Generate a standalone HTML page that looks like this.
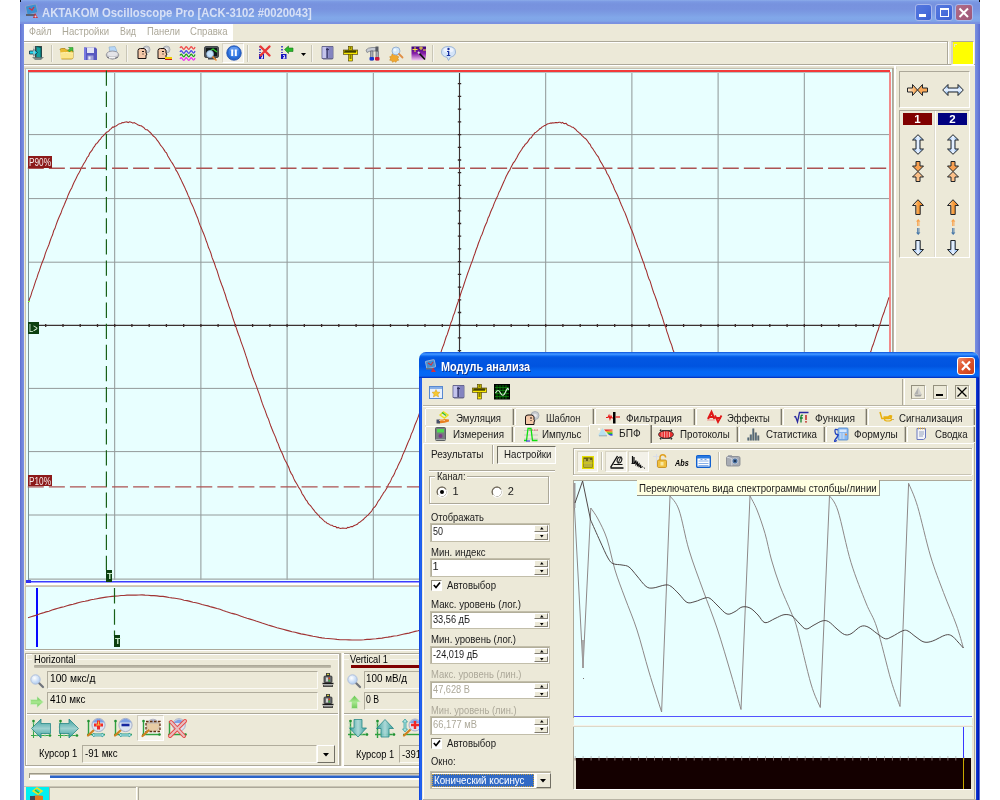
<!DOCTYPE html><html><head><meta charset="utf-8"><title>AKTAKOM Oscilloscope Pro</title><style>
html,body{margin:0;padding:0;background:#fff;}
body{width:1000px;height:800px;overflow:hidden;position:relative;font-family:"Liberation Sans",sans-serif;}
div,svg,span.t{position:absolute;box-sizing:border-box}
span.t{white-space:pre;line-height:1;}
#w{left:0;top:0;width:1000px;height:800px;will-change:transform;}
svg{overflow:visible}
</style></head><body><div id="w">
<div style="left:20px;top:0px;width:959.5px;height:800px;background:#ece9d8"></div>
<div style="left:20px;top:0px;width:959.5px;height:24px;background:linear-gradient(#8cace9 0%,#7b99e3 7%,#7792de 17%,#7893df 38%,#7c9ce3 55%,#81a7e9 72%,#80a5e8 88%,#7990e0 95%,#7b92e0 100%)"></div>
<div style="left:20px;top:0px;width:1px;height:2px;background:#101018"></div>
<div style="left:979px;top:0px;width:1px;height:1.5px;background:#101018"></div>
<div style="left:20px;top:24px;width:4px;height:776px;background:linear-gradient(90deg,#5b6bcf,#6d82da 40%,#7a90e2)"></div>
<div style="left:975px;top:24px;width:4.5px;height:776px;background:linear-gradient(90deg,#7a90e2,#6d82da 50%,#5b6bcf)"></div>
<svg style="left:23px;top:3px;" width="18" height="17" viewBox="0 0 18 17"><rect x="3" y="2" width="11" height="9" rx="1" fill="#3a8fd0" stroke="#8aa0c8" stroke-width="1" transform="rotate(-12 8 6)"/><path d="M6 5l3 2 2-3" stroke="#d03040" stroke-width="1.3" fill="none"/><rect x="3" y="11" width="9" height="2" fill="#5a6070"/><path d="M10 15l5 0-3-5z" fill="#c03040"/><circle cx="12.5" cy="13.5" r="1" fill="#f0d0d0"/></svg>
<span class="t" style="left:42.3px;top:5.70px;font-size:13px;color:#d6e0f6;font-weight:bold;transform:scaleX(0.8688);transform-origin:0 0;">AKTAKOM Oscilloscope Pro [ACK-3102 #0020043]</span>
<div style="left:914.7px;top:3.5px;width:17.5px;height:17px;background:linear-gradient(135deg,#5577dd,#4a6fdc 50%,#3b5fd0);border:1px solid #a8b8ec;border-radius:3px"></div>
<div style="left:935px;top:3.5px;width:17.5px;height:17px;background:linear-gradient(135deg,#5577dd,#4a6fdc 50%,#3b5fd0);border:1px solid #a8b8ec;border-radius:3px"></div>
<div style="left:955.3px;top:3.5px;width:17.5px;height:17px;background:linear-gradient(135deg,#b07088,#a86080 50%,#9c5878);border:1px solid #a8b8ec;border-radius:3px"></div>
<div style="left:919px;top:14px;width:6.5px;height:2.6px;background:#fff"></div>
<div style="left:939.5px;top:7.5px;width:9px;height:9px;border:1px solid #fff;border-top:2.5px solid #fff"></div>
<svg style="left:955.3px;top:3.5px;" width="17.5" height="17" viewBox="0 0 17.5 17"><path d="M4.5 4.5l8.5 8.5M13 4.5l-8.5 8.5" stroke="#fff" stroke-width="2" /></svg>
<div style="left:24px;top:24px;width:209px;height:17px;background:#fff"></div>
<span class="t" style="left:28.5px;top:26.49px;font-size:11px;color:#aca899;transform:scaleX(0.8319);transform-origin:0 0;">Файл</span>
<span class="t" style="left:62px;top:26.49px;font-size:11px;color:#aca899;transform:scaleX(0.8714);transform-origin:0 0;">Настройки</span>
<span class="t" style="left:119.6px;top:26.49px;font-size:11px;color:#aca899;transform:scaleX(0.8038);transform-origin:0 0;">Вид</span>
<span class="t" style="left:147px;top:26.49px;font-size:11px;color:#aca899;transform:scaleX(0.8589);transform-origin:0 0;">Панели</span>
<span class="t" style="left:190px;top:26.49px;font-size:11px;color:#aca899;transform:scaleX(0.8689);transform-origin:0 0;">Справка</span>
<div style="left:24px;top:41px;width:924px;height:1px;background:#aca899"></div>
<div style="left:24px;top:42px;width:924px;height:1px;background:#fff"></div>
<div style="left:24px;top:64px;width:951px;height:1px;background:#aca899"></div>
<div style="left:24px;top:65px;width:951px;height:1px;background:#fff"></div>
<div style="left:947px;top:42px;width:1px;height:22px;background:#aca899"></div>
<div style="left:948px;top:42px;width:1px;height:22px;background:#fff"></div>
<div style="left:951px;top:41px;width:23px;height:24px;background:#ffff00;border-top:1px solid #aca899;border-left:2px solid #d8d4c0;border-right:1px solid #fff;border-bottom:1px solid #fff"></div>
<div style="left:954px;top:44px;width:3px;height:1px;background:#e8e8c0"></div>
<div style="left:954px;top:44px;width:1px;height:3px;background:#e8e8c0"></div>
<div style="left:51px;top:45px;width:1px;height:17px;background:#c9c6b6"></div>
<div style="left:52px;top:45px;width:1px;height:17px;background:#f6f5ef"></div>
<div style="left:126px;top:45px;width:1px;height:17px;background:#c9c6b6"></div>
<div style="left:127px;top:45px;width:1px;height:17px;background:#f6f5ef"></div>
<div style="left:247px;top:45px;width:1px;height:17px;background:#c9c6b6"></div>
<div style="left:248px;top:45px;width:1px;height:17px;background:#f6f5ef"></div>
<div style="left:311px;top:45px;width:1px;height:17px;background:#c9c6b6"></div>
<div style="left:312px;top:45px;width:1px;height:17px;background:#f6f5ef"></div>
<div style="left:432px;top:45px;width:1px;height:17px;background:#c9c6b6"></div>
<div style="left:433px;top:45px;width:1px;height:17px;background:#f6f5ef"></div>
<div style="left:222px;top:43px;width:22px;height:20px;background:#f4f2ea;border:1px solid #d8d4c4;border-bottom-color:#fff;border-right-color:#fff"></div>
<svg style="left:29px;top:45px;" width="16" height="16" viewBox="0 0 16 16"><path d="M6 1h7v12h-7z" fill="#404848"/><path d="M7.5 1.5l4.5 1v11l-4.5-1.5z" fill="#10a0a0"/><path d="M7.5 1.5l4.5 1v11" stroke="#004848" stroke-width=".8" fill="none"/><path d="M0.5 6h4v-2l4 3.5-4 3.5v-2h-4z" fill="#20d8f0" stroke="#103040" stroke-width=".8"/><path d="M3 12h12l-3 3h-6z" fill="#607070" opacity=".8"/><path d="M5 1v11" stroke="#c0c8c8" stroke-width="1.2"/></svg>
<svg style="left:58.5px;top:45px;" width="16" height="16" viewBox="0 0 16 16"><path d="M1 5q0-1.5 1.5-1.5h3.5l1.5 1.5h5q1.5 0 1.5 1.5v6q0 1.5-1.5 1.5h-10q-1.500-1.5-1.5z" fill="#e8b830" stroke="#b08818" stroke-width=".8"/><path d="M1.5 8h12.500v4.500q0 1-1 1h-10.500q-1 0-1-1z" fill="#fce68c"/><path d="M1.500 8q4-1 12.500 0" stroke="#fff4b8" stroke-width="1" fill="none"/><path d="M9.500 2.500h4.500v4l-1.500-1.500-2 2-1.500-1.500 2-2z" fill="#40c040" stroke="#208020" stroke-width=".5"/></svg>
<svg style="left:82.5px;top:45.5px;" width="16" height="16" viewBox="0 0 16 16"><path d="M1 1.500h11.500l1.500 1.500v11h-13z" fill="#5858c0"/><path d="M1 1.500h2v12.500h-2z" fill="#7878e0"/><rect x="4" y="1.500" width="7" height="5.500" fill="#e4e4f4"/><rect x="4.500" y="9.500" width="6" height="4.500" fill="#a0a0d8"/><rect x="5.500" y="10.500" width="2" height="3" fill="#e8e8f8"/></svg>
<svg style="left:105px;top:45.5px;" width="16" height="16" viewBox="0 0 16 16"><path d="M4 1l6-.5 2 5-7 1z" fill="#b8d8f8" stroke="#88a8c8" stroke-width=".6"/><ellipse cx="7.500" cy="9" rx="6.300" ry="4" fill="#c8c8cc" stroke="#8c8c94" stroke-width=".8"/><ellipse cx="7.500" cy="8" rx="5" ry="2.200" fill="#e4e4e8"/><path d="M2 11q5.500 3.500 11 0" stroke="#707078" stroke-width="1" fill="none"/><rect x="4" y="11" width="6" height="1.500" fill="#f4f4f4"/></svg>
<svg style="left:136.5px;top:45px;" width="16" height="16" viewBox="0 0 16 16"><circle cx="9.500" cy="4.500" r="3.500" fill="#c8ccd0" stroke="#9ca0a8" stroke-width=".8"/><circle cx="9.500" cy="4.500" r="1.500" fill="#e8e8ec"/><path d="M1 5.500q0-2 2.500-2h3.500l2 1.500v3l1 1.500-1 .5v3.500h-8z" fill="#f4c8a8" stroke="#181010" stroke-width="1"/><path d="M5 6.500h2M6 8.500v1" stroke="#181010" stroke-width="1"/></svg>
<svg style="left:157px;top:45px;" width="16" height="16" viewBox="0 0 16 16"><circle cx="9.500" cy="4.500" r="3.500" fill="#c8ccd0" stroke="#9ca0a8" stroke-width=".8"/><circle cx="9.500" cy="4.500" r="1.500" fill="#e8e8ec"/><path d="M1 5.500q0-2 2.500-2h3.500l2 1.500v3l1 1.500-1 .5v3.500h-8z" fill="#f4c8a8" stroke="#181010" stroke-width="1"/><path d="M5 6.500h2M6 8.500v1" stroke="#181010" stroke-width="1"/></svg>
<div style="left:165px;top:57px;width:7px;height:1.5px;background:#f0d000"></div>
<div style="left:165px;top:58.5px;width:7px;height:1.5px;background:#d01818"></div>
<svg style="left:180px;top:44.5px;" width="16" height="16" viewBox="0 0 16 16"><path d="M0 3q1.200-2.500 2.500 0t2.500 0 2.500 0 2.500 0 2.500 0 2.500-1" stroke="#f04848" stroke-width="1.300" fill="none"/><path d="M0 7q1.200-2.500 2.500 0t2.500 0 2.500 0 2.500 0 2.500 0 2.500-1" stroke="#4848e8" stroke-width="1.300" fill="none"/><path d="M0 10.500q1.200-2.500 2.500 0t2.500 0 2.500 0 2.500 0 2.500 0 2.500-1" stroke="#20a020" stroke-width="1.300" fill="none"/><path d="M0 14q1.200-2.500 2.500 0t2.500 0 2.500 0 2.500 0 2.500 0 2.500-1" stroke="#f030f0" stroke-width="1.300" fill="none"/></svg>
<svg style="left:203.5px;top:45.5px;" width="16" height="16" viewBox="0 0 16 16"><rect x=".5" y=".5" width="14" height="11" rx="1.500" fill="#505458" stroke="#303438" stroke-width=".8"/><rect x="2" y="2" width="11" height="8" fill="#101818"/><path d="M6 5l3-2 4 3" stroke="#30d030" stroke-width="1.200" fill="none"/><rect x="4" y="12" width="8" height="1.500" fill="#404448"/><circle cx="6" cy="8" r="3.500" fill="#c8e4fc" stroke="#88a8d0" stroke-width=".8"/><path d="M8.500 10.500l4 4" stroke="#e88830" stroke-width="1.600"/></svg>
<svg style="left:225.5px;top:45px;" width="16" height="16" viewBox="0 0 16 16"><circle cx="8" cy="8" r="7.300" fill="#2868d0"/><circle cx="8" cy="7" r="5.500" fill="#3c80e8"/><ellipse cx="8" cy="4.200" rx="4.500" ry="2.200" fill="#78a8f4" opacity=".6"/><rect x="5.200" y="4.500" width="2" height="6.500" fill="#fff"/><rect x="8.800" y="4.500" width="2" height="6.500" fill="#fff"/><circle cx="8" cy="8" r="7.300" fill="none" stroke="#1848a8" stroke-width=".7"/></svg>
<svg style="left:257.5px;top:45px;" width="16" height="16" viewBox="0 0 16 16"><rect x="1" y="9" width="5" height="5" fill="#1818c0"/><path d="M3 10.500h1.500v2.500h-1.500M3 13h2" stroke="#fff" stroke-width=".8" fill="none"/><path d="M2 1v1.500M2 4v1.500M2 7v1" stroke="#1818c0" stroke-width="1.500"/><path d="M2.500 1.500l9 9M11.500 1.500l-9 9" stroke="#e83838" stroke-width="2.400" stroke-linecap="round"/></svg>
<svg style="left:279.5px;top:45px;" width="16" height="16" viewBox="0 0 16 16"><rect x="1" y="9" width="5.500" height="5" fill="#1818c0"/><path d="M3 10.500h1.500v2.500h-1.500M3 13h2.500" stroke="#fff" stroke-width=".8" fill="none"/><path d="M2 1v1.500M2 4v1.500M2 7v1" stroke="#1818c0" stroke-width="1.500"/><path d="M4.500 4.500l4-3.500v2h4.500v3.500h-4.500v2z" fill="#28b828" stroke="#187818" stroke-width=".6"/></svg>
<svg style="left:300.5px;top:52.5px;" width="5" height="3" viewBox="0 0 5 3"><path d="M0 0h5l-2.500 3z" fill="#000"/></svg>
<svg style="left:320.5px;top:45px;" width="16" height="16" viewBox="0 0 16 16"><path d="M1 1.500h11v12h-11z" fill="#9898d0" stroke="#505080" stroke-width=".8"/><path d="M1.500 2h3.500v11h-3.500z" fill="#c4c4ec"/><path d="M7.500 2h4v11h-4z" fill="#8484c0"/><path d="M6.200 3v10" stroke="#404070" stroke-width="1.400"/><path d="M5 4.500h3" stroke="#303060" stroke-width="1.200"/><path d="M2 14h9.500" stroke="#6c6c90" stroke-width="1"/></svg>
<svg style="left:342.5px;top:45.5px;" width="16" height="16" viewBox="0 0 16 16"><rect x="5.500" y=".3" width="4" height="14.700" fill="#f8e800" stroke="#403400" stroke-width=".6"/><rect x=".3" y="4" width="14.400" height="4.300" fill="#f8e800" stroke="#403400" stroke-width=".6"/><path d="M2 5.500v1.500M4 5.500v1.500M6 5.500v1.500M8 5.500v1.500M10 5.500v1.500M12 5.500v1.500M6.500 10h2M6.500 12h2M6.500 2h2M1.500 5h12" stroke="#101000" stroke-width="1.1"/></svg>
<svg style="left:365px;top:45.5px;" width="16" height="16" viewBox="0 0 16 16"><path d="M1 4q2-2.500 6-2.500h4v3.500h-4q-3 0-5 1.500z" fill="#c8ccd4" stroke="#70747c" stroke-width=".7"/><rect x="10.500" y=".5" width="3" height="5" fill="#585c64"/><path d="M5.500 5h2.500v9h-2.500z" fill="#a8acb4" stroke="#585c64" stroke-width=".6"/><path d="M11 5.500h2.500v8.500h-2.500z" fill="#a8acb4" stroke="#585c64" stroke-width=".6"/><rect x="4.500" y="11" width="4.500" height="3.500" rx="1" fill="#1838d0"/><rect x="10" y="11" width="4.500" height="3.500" rx="1" fill="#d01838"/></svg>
<svg style="left:387.5px;top:45.5px;" width="16" height="16" viewBox="0 0 16 16"><path d="M5.500 7l1.200 1.500 2-.5.300 2 1.800.8-1 1.700 1 1.700-2 .3-.8 1.800-1.700-1-1.800 1-.8-1.800-2-.3.800-1.700-.8-1.800 2-.7.300-2z" fill="#f0a830" stroke="#c88018" stroke-width=".5"/><circle cx="8" cy="5" r="4" fill="#d0e8fc" stroke="#98b0d0" stroke-width="1"/><circle cx="7" cy="4" r="1.500" fill="#f0f8ff"/><path d="M11 8l3.500 3.500" stroke="#e09048" stroke-width="1.800" stroke-linecap="round"/></svg>
<svg style="left:410.5px;top:45.5px;" width="16" height="16" viewBox="0 0 16 16"><defs><linearGradient id="wz" x1="0" y1="0" x2="0" y2="1"><stop offset="0" stop-color="#380078"/><stop offset=".5" stop-color="#8820a8"/><stop offset="1" stop-color="#f0c8f0"/></linearGradient></defs><path d="M.5.5h14.500v11l-3 3h-11.500z" fill="url(#wz)"/><path d="M4 1v5M1.500 3.500h5M10 .5v3.500M8 2h4M12 4h3" stroke="#f8e040" stroke-width="1"/><path d="M7.500 6.500l6.500 7" stroke="#101010" stroke-width="1.800"/><path d="M7 6l1.500 1.500" stroke="#e0e0e0" stroke-width="1.800"/></svg>
<svg style="left:440.5px;top:45.5px;" width="16" height="16" viewBox="0 0 16 16"><path d="M7.500.5q7 0 7 5.500 0 4-5 5.200l-2 3.300-1.500-3.200q-5.500-1-5.500-5.300 0-5.500 7-5.500z" fill="#d4e4f8" stroke="#8ca8d0" stroke-width=".8"/><ellipse cx="7.500" cy="4" rx="5" ry="2.500" fill="#f4f8ff" opacity=".8"/><circle cx="7.500" cy="3" r="1.200" fill="#1830a0"/><path d="M6 5h2.300v4h1v1h-3.500v-1h1.200v-3h-1z" fill="#1830a0"/></svg>
<div style="left:24px;top:66px;width:873px;height:3px;background:linear-gradient(#ece9d8,#d4d0c0)"></div>
<div style="left:25px;top:68px;width:869px;height:1px;background:#c4c0b0"></div>
<div style="left:25px;top:68px;width:1px;height:518px;background:#c8c2ae"></div>
<div style="left:26px;top:69px;width:866px;height:514px;background:#e8ffff"></div>
<div style="left:892px;top:68px;width:1px;height:517px;background:#aca899"></div>
<div style="left:893px;top:68px;width:1px;height:517px;background:#b8b4a4"></div>
<div style="left:894px;top:66px;width:2px;height:520px;background:#fff"></div>
<svg style="left:0px;top:0px;" width="1000" height="800" viewBox="0 0 1000 800"><path d="M114.7 72V580M200.9 72V580M287.1 72V580M373.3 72V580M545.7 72V580M631.9 72V580M718.1 72V580M804.3 72V580" stroke="#8e9696" stroke-width="1" fill="none"/><path d="M29 134.6H889M29 198.6H889M29 262.2H889M29 388.4H889M29 451.6H889M29 515.0H889" stroke="#939a9a" stroke-width="1" fill="none"/><path d="M29 579.200H889" stroke="#a2aaa8" stroke-width="1.300"/><path d="M28.500 70V580" stroke="#7c9494" stroke-width="1"/><path d="M38 325.400H889M459.500 72V580" stroke="#3c3232" stroke-width="1.150" fill="none"/><path d="M45.7 323.900V326.900M63.0 323.900V326.900M80.2 323.900V326.900M97.5 323.900V326.900M114.7 323.900V326.900M131.9 323.900V326.900M149.2 323.900V326.900M166.4 323.900V326.900M183.7 323.900V326.900M200.9 323.900V326.900M218.1 323.900V326.900M235.4 323.900V326.900M252.6 323.900V326.900M269.9 323.900V326.900M287.1 323.900V326.900M304.3 323.900V326.900M321.6 323.900V326.900M338.8 323.900V326.900M356.1 323.900V326.900M373.3 323.900V326.900M390.5 323.900V326.900M407.8 323.900V326.900M425.0 323.900V326.900M442.3 323.900V326.900M459.5 323.900V326.900M476.7 323.900V326.900M494.0 323.900V326.900M511.2 323.900V326.900M528.5 323.900V326.900M545.7 323.900V326.900M562.9 323.900V326.900M580.2 323.900V326.900M597.4 323.900V326.900M614.7 323.900V326.900M631.9 323.900V326.900M649.1 323.900V326.900M666.4 323.900V326.900M683.6 323.900V326.900M700.9 323.900V326.900M718.1 323.900V326.900M735.3 323.900V326.900M752.6 323.900V326.900M769.8 323.900V326.900M787.1 323.900V326.900M804.3 323.900V326.900M821.5 323.900V326.900M838.8 323.900V326.900M856.0 323.900V326.900M873.3 323.900V326.900M457.800 71.0H461.200M457.800 83.7H461.200M457.800 96.4H461.200M457.800 109.1H461.200M457.800 121.8H461.200M457.800 134.6H461.200M457.800 147.3H461.200M457.800 160.0H461.200M457.800 172.7H461.200M457.800 185.4H461.200M457.800 198.1H461.200M457.800 210.8H461.200M457.800 223.5H461.200M457.800 236.2H461.200M457.800 248.9H461.200M457.800 261.6H461.200M457.800 274.4H461.200M457.800 287.1H461.200M457.800 299.8H461.200M457.800 312.5H461.200M457.800 325.2H461.200M457.800 337.9H461.200M457.800 350.6H461.200M457.800 363.3H461.200M457.800 376.0H461.200M457.800 388.8H461.200M457.800 401.5H461.200M457.800 414.2H461.200M457.800 426.9H461.200M457.800 439.6H461.200M457.800 452.3H461.200M457.800 465.0H461.200M457.800 477.7H461.200M457.800 490.4H461.200M457.800 503.1H461.200M457.800 515.9H461.200M457.800 528.6H461.200M457.800 541.3H461.200M457.800 554.0H461.200M457.800 566.7H461.200M457.800 579.4H461.200" stroke="#382828" stroke-width="1.300" fill="none"/></svg>
<div style="left:28px;top:70px;width:862px;height:2px;background:#f23a3a"></div>
<div style="left:29px;top:72px;width:860px;height:1px;background:#b8c4c4"></div>
<div style="left:889px;top:72px;width:2px;height:510px;background:#f28a8a"></div>
<div style="left:26px;top:581px;width:866px;height:1px;background:#3c3cff"></div>
<div style="left:26px;top:582px;width:866px;height:1px;background:#9c9cff"></div>
<div style="left:26px;top:580px;width:5px;height:3px;background:#3030f0"></div>
<div style="left:26px;top:583px;width:866px;height:2px;background:#fff"></div>
<div style="left:25px;top:585px;width:870px;height:1px;background:#d8cfb8"></div>
<div style="left:25px;top:586px;width:870px;height:1px;background:#cfccc0"></div>
<svg style="left:0px;top:0px;" width="1000" height="800" viewBox="0 0 1000 800"><path d="M28.5,302.3 L29.7,298.5 L30.9,295.6 L32.1,291.4 L33.3,288.4 L34.5,284.7 L35.7,280.9 L36.9,277.9 L38.1,273.9 L39.3,270.9 L40.5,267.1 L41.7,263.7 L42.9,260.7 L44.1,257.8 L45.3,253.6 L46.5,250.4 L47.7,247.6 L48.9,244.7 L50.1,241.0 L51.3,237.6 L52.5,235.1 L53.7,230.8 L54.9,228.6 L56.1,224.8 L57.3,221.5 L58.5,218.5 L59.7,215.7 L60.9,213.3 L62.1,209.6 L63.3,207.1 L64.5,204.3 L65.7,201.2 L66.9,198.6 L68.1,195.2 L69.3,192.5 L70.5,190.0 L71.7,187.9 L72.9,185.0 L74.1,182.3 L75.3,180.1 L76.5,177.5 L77.7,174.9 L78.9,173.1 L80.1,170.7 L81.3,167.9 L82.5,166.0 L83.7,163.8 L84.9,162.1 L86.1,159.8 L87.3,157.2 L88.5,156.1 L89.7,153.1 L90.9,151.6 L92.1,150.2 L93.3,147.7 L94.5,146.4 L95.7,144.2 L96.9,143.4 L98.1,141.9 L99.3,140.2 L100.5,139.1 L101.7,137.1 L102.9,136.2 L104.1,134.9 L105.3,133.6 L106.5,132.3 L107.7,131.7 L108.9,130.8 L110.1,129.3 L111.3,128.6 L112.5,127.1 L113.7,127.1 L114.9,126.3 L116.1,126.0 L117.3,125.2 L118.5,124.1 L119.7,123.7 L120.9,123.6 L122.1,122.5 L123.3,122.8 L124.5,122.2 L125.7,122.0 L126.9,121.8 L128.1,122.6 L129.3,121.9 L130.5,122.1 L131.7,122.4 L132.9,123.2 L134.1,122.6 L135.3,123.3 L136.5,123.9 L137.7,124.7 L138.9,125.2 L140.1,125.8 L141.3,125.8 L142.5,126.7 L143.7,127.4 L144.9,128.8 L146.1,129.8 L147.3,129.8 L148.5,130.8 L149.7,132.0 L150.9,133.1 L152.1,134.6 L153.3,136.0 L154.5,136.9 L155.7,138.0 L156.9,139.9 L158.1,141.3 L159.3,143.1 L160.5,145.2 L161.7,146.5 L162.9,148.0 L164.1,149.9 L165.3,151.8 L166.5,152.9 L167.7,155.8 L168.9,157.7 L170.1,159.8 L171.3,161.8 L172.5,163.4 L173.7,165.6 L174.9,167.5 L176.1,170.4 L177.3,172.0 L178.5,174.4 L179.7,177.0 L180.9,179.4 L182.1,182.1 L183.3,184.4 L184.5,186.9 L185.7,189.7 L186.9,192.3 L188.1,195.4 L189.3,197.7 L190.5,201.5 L191.7,204.1 L192.9,206.4 L194.1,209.4 L195.3,212.5 L196.5,215.5 L197.7,218.2 L198.9,222.1 L200.1,225.4 L201.3,227.9 L202.5,231.0 L203.7,233.7 L204.9,236.9 L206.1,240.5 L207.3,243.6 L208.5,247.6 L209.7,250.1 L210.9,253.2 L212.1,257.7 L213.3,260.5 L214.5,263.5 L215.7,267.4 L216.9,270.2 L218.1,274.2 L219.3,278.2 L220.5,281.5 L221.7,284.8 L222.9,287.8 L224.1,291.4 L225.3,294.7 L226.5,299.0 L227.7,302.2 L228.9,306.1 L230.1,309.1 L231.3,312.5 L232.5,316.8 L233.7,320.5 L234.9,323.9 L236.1,327.4 L237.3,331.0 L238.5,334.5 L239.7,337.4 L240.9,341.3 L242.1,344.7 L243.3,347.9 L244.5,351.4 L245.7,355.2 L246.9,358.7 L248.1,362.7 L249.3,366.6 L250.5,369.4 L251.7,373.5 L252.9,377.0 L254.1,380.4 L255.3,383.1 L256.5,386.4 L257.7,389.8 L258.9,393.1 L260.1,396.4 L261.3,400.3 L262.5,403.9 L263.7,407.1 L264.9,409.9 L266.1,413.4 L267.3,416.7 L268.5,419.1 L269.7,422.9 L270.9,426.3 L272.1,429.2 L273.3,432.2 L274.5,434.9 L275.7,437.6 L276.9,441.2 L278.1,443.6 L279.3,447.0 L280.5,450.1 L281.7,452.2 L282.9,455.0 L284.1,458.3 L285.3,460.7 L286.5,462.7 L287.7,465.3 L288.9,467.8 L290.1,471.3 L291.3,473.6 L292.5,475.2 L293.7,478.4 L294.9,480.9 L296.1,482.8 L297.3,484.7 L298.5,487.1 L299.7,488.7 L300.9,490.7 L302.1,493.8 L303.3,495.4 L304.5,497.2 L305.7,499.6 L306.9,500.8 L308.1,503.1 L309.3,504.7 L310.5,505.6 L311.7,507.3 L312.9,508.9 L314.1,510.3 L315.3,512.1 L316.5,513.1 L317.7,514.6 L318.9,515.5 L320.1,517.6 L321.3,518.1 L322.5,519.3 L323.7,520.5 L324.9,521.8 L326.1,522.1 L327.3,523.6 L328.5,523.8 L329.7,524.6 L330.9,525.2 L332.1,525.2 L333.3,526.2 L334.5,526.4 L335.7,526.6 L336.9,527.9 L338.1,527.4 L339.3,528.0 L340.5,528.5 L341.7,528.3 L342.9,528.1 L344.1,528.3 L345.3,528.2 L346.5,528.4 L347.7,527.3 L348.9,527.6 L350.1,526.9 L351.3,526.5 L352.5,526.6 L353.7,525.8 L354.9,525.2 L356.1,524.8 L357.3,524.3 L358.5,522.9 L359.7,522.3 L360.9,521.3 L362.1,520.3 L363.3,519.5 L364.5,518.1 L365.7,517.1 L366.9,515.8 L368.1,515.1 L369.3,513.5 L370.5,512.4 L371.7,511.0 L372.9,508.7 L374.1,507.5 L375.3,506.4 L376.5,504.6 L377.7,502.0 L378.9,500.3 L380.1,498.8 L381.3,496.5 L382.5,494.8 L383.7,492.6 L384.9,491.3 L386.1,489.3 L387.3,487.3 L388.5,484.3 L389.7,482.7 L390.9,480.4 L392.1,477.4 L393.3,475.9 L394.5,473.6 L395.7,470.2 L396.9,468.6 L398.1,465.4 L399.3,462.9 L400.5,460.8 L401.7,458.0 L402.9,454.4 L404.1,452.0 L405.3,449.3 L406.5,446.2 L407.7,443.2 L408.9,440.4 L410.1,438.0 L411.3,434.1 L412.5,431.8 L413.7,428.6 L414.9,425.0 L416.1,422.2 L417.3,419.4 L418.5,416.1 L419.7,412.4 L420.9,410.3 L422.1,406.8 L423.3,403.7 L424.5,399.4 L425.7,396.2 L426.9,392.6 L428.1,390.1 L429.3,386.1 L430.5,382.6 L431.7,379.5 L432.9,376.6 L434.1,373.1 L435.3,368.9 L436.5,365.3 L437.7,362.7 L438.9,358.8 L440.1,355.4 L441.3,351.2 L442.5,347.6 L443.7,344.8 L444.9,340.9 L446.1,337.0 L447.3,334.4 L448.5,330.5 L449.7,327.1 L450.9,322.7 L452.1,320.1 L453.3,315.6 L454.5,313.0 L455.7,308.9 L456.9,305.2 L458.1,301.9 L459.3,298.9 L460.5,294.5 L461.7,290.9 L462.9,287.8 L464.1,284.0 L465.3,280.3 L466.5,276.9 L467.7,273.3 L468.9,270.1 L470.1,266.8 L471.3,263.4 L472.5,260.5 L473.7,256.6 L474.9,253.5 L476.1,249.8 L477.3,246.7 L478.5,243.0 L479.7,240.1 L480.9,236.6 L482.1,234.2 L483.3,230.8 L484.5,227.3 L485.7,224.5 L486.9,222.0 L488.1,217.9 L489.3,215.8 L490.5,212.3 L491.7,209.5 L492.9,207.0 L494.1,203.6 L495.3,200.9 L496.5,198.3 L497.7,195.9 L498.9,192.4 L500.1,190.3 L501.3,187.5 L502.5,184.8 L503.7,182.0 L504.9,179.4 L506.1,176.6 L507.3,174.3 L508.5,171.9 L509.7,170.3 L510.9,167.5 L512.1,165.2 L513.3,162.9 L514.5,161.7 L515.7,159.6 L516.9,157.4 L518.1,154.9 L519.3,153.0 L520.5,151.2 L521.7,149.5 L522.9,147.4 L524.1,146.1 L525.3,144.2 L526.5,143.4 L527.7,141.9 L528.9,139.9 L530.1,138.1 L531.3,137.7 L532.5,135.6 L533.7,134.4 L534.9,132.7 L536.1,132.1 L537.3,131.1 L538.5,130.1 L539.7,128.8 L540.9,128.3 L542.1,126.9 L543.3,126.4 L544.5,125.5 L545.7,125.2 L546.9,124.2 L548.1,123.7 L549.3,123.5 L550.5,123.1 L551.7,123.1 L552.9,122.8 L554.1,122.9 L555.3,122.6 L556.5,122.6 L557.7,122.8 L558.9,122.2 L560.1,122.2 L561.3,123.2 L562.5,122.4 L563.7,123.4 L564.9,123.6 L566.1,123.3 L567.3,124.8 L568.5,125.4 L569.7,125.7 L570.9,126.4 L572.1,127.3 L573.3,127.2 L574.5,128.5 L575.7,129.4 L576.9,130.8 L578.1,131.8 L579.3,132.9 L580.5,133.7 L581.7,135.3 L582.9,136.3 L584.1,137.7 L585.3,138.5 L586.5,139.7 L587.7,141.3 L588.9,143.1 L590.1,144.4 L591.3,147.0 L592.5,148.3 L593.7,150.2 L594.9,152.0 L596.1,154.0 L597.3,155.7 L598.5,157.1 L599.7,160.1 L600.9,162.1 L602.1,163.9 L603.3,166.2 L604.5,168.5 L605.7,170.1 L606.9,173.3 L608.1,175.0 L609.3,177.3 L610.5,180.0 L611.7,183.0 L612.9,185.0 L614.1,188.2 L615.3,191.1 L616.5,193.2 L617.7,195.8 L618.9,198.7 L620.1,201.8 L621.3,204.7 L622.5,207.4 L623.7,210.4 L624.9,212.6 L626.1,215.7 L627.3,218.9 L628.5,222.5 L629.7,225.1 L630.9,228.5 L632.1,231.0 L633.3,234.2 L634.5,237.7 L635.7,241.4 L636.9,244.7 L638.1,247.9 L639.3,250.8 L640.5,254.4 L641.7,257.7 L642.9,261.0 L644.1,264.0 L645.3,268.3 L646.5,270.9 L647.7,275.3 L648.9,278.7 L650.1,281.1 L651.3,285.1 L652.5,289.1 L653.7,292.7 L654.9,295.6 L656.1,299.0 L657.3,302.4 L658.5,306.9 L659.7,309.5 L660.9,313.5 L662.1,316.6 L663.3,320.6 L664.5,324.7 L665.7,327.2 L666.9,331.6 L668.1,334.8 L669.3,338.8 L670.5,342.2 L671.7,345.1 L672.9,349.5 L674.1,352.5 L675.3,355.5 L676.5,359.0 L677.7,363.1 L678.9,366.5 L680.1,369.8 L681.3,373.1 L682.5,376.8 L683.7,380.2 L684.9,384.3 L686.1,386.7 L687.3,391.0 L688.5,394.4 L689.7,396.9 L690.9,401.2 L692.1,404.2 L693.3,407.7 L694.5,410.2 L695.7,413.6 L696.9,416.8 L698.1,420.7 L699.3,423.3 L700.5,426.2 L701.7,429.3 L702.9,432.2 L704.1,434.9 L705.3,438.0 L706.5,441.8 L707.7,444.0 L708.9,447.7 L710.1,449.7 L711.3,452.5 L712.5,455.5 L713.7,457.9 L714.9,460.8 L716.1,464.1 L717.3,466.6 L718.5,469.1 L719.7,471.3 L720.9,474.1 L722.1,476.6 L723.3,478.5 L724.5,481.0 L725.7,482.5 L726.9,485.5 L728.1,487.3 L729.3,489.8 L730.5,491.8 L731.7,493.3 L732.9,495.0 L734.1,498.0 L735.3,498.9 L736.5,501.1 L737.7,502.7 L738.9,504.4 L740.1,506.5 L741.3,508.4 L742.5,509.1 L743.7,511.0 L744.9,512.0 L746.1,513.7 L747.3,514.8 L748.5,515.8 L749.7,516.9 L750.9,518.1 L752.1,520.0 L753.3,520.5 L754.5,521.2 L755.7,522.9 L756.9,523.8 L758.1,523.9 L759.3,524.2 L760.5,524.9 L761.7,525.4 L762.9,526.2 L764.1,526.4 L765.3,526.9 L766.5,527.3 L767.7,527.9 L768.9,528.5 L770.1,528.5 L771.3,528.2 L772.5,528.2 L773.7,528.3 L774.9,528.0 L776.1,527.8 L777.3,527.2 L778.5,527.2 L779.7,527.7 L780.9,526.2 L782.1,526.2 L783.3,525.8 L784.5,525.5 L785.7,524.0 L786.9,523.4 L788.1,522.6 L789.3,521.9 L790.5,521.0 L791.7,520.7 L792.9,519.5 L794.1,518.5 L795.3,516.3 L796.5,515.1 L797.7,514.6 L798.9,513.5 L800.1,511.6 L801.3,510.3 L802.5,508.1 L803.7,507.1 L804.9,506.1 L806.1,504.3 L807.3,502.6 L808.5,501.0 L809.7,498.3 L810.9,496.2 L812.1,494.3 L813.3,492.8 L814.5,490.9 L815.7,489.2 L816.9,486.8 L818.1,484.5 L819.3,482.4 L820.5,479.7 L821.7,477.5 L822.9,474.5 L824.1,473.0 L825.3,469.8 L826.5,468.1 L827.7,465.2 L828.9,462.2 L830.1,459.4 L831.3,456.8 L832.5,454.6 L833.7,451.9 L834.9,448.3 L836.1,445.4 L837.3,443.1 L838.5,440.3 L839.7,437.1 L840.9,433.9 L842.1,431.3 L843.3,427.5 L844.5,424.8 L845.7,421.9 L846.9,419.3 L848.1,415.8 L849.3,412.8 L850.5,409.1 L851.7,405.6 L852.9,402.3 L854.1,399.9 L855.3,396.2 L856.5,392.4 L857.7,388.7 L858.9,385.8 L860.1,382.6 L861.3,378.9 L862.5,375.3 L863.7,372.3 L864.9,369.1 L866.1,364.8 L867.3,361.1 L868.5,357.9 L869.7,354.5 L870.9,351.3 L872.1,347.2 L873.3,344.3 L874.5,340.7 L875.7,336.9 L876.9,333.0 L878.1,330.3 L879.3,326.0 L880.5,323.0 L881.7,318.7 L882.9,315.2 L884.1,312.3 L885.3,308.1 L886.5,305.4 L887.7,301.3 L888.9,297.4" fill="none" stroke="#a02c2c" stroke-width="1.05"/></svg>
<div style="left:28px;top:300.5px;width:1.5px;height:1.5px;background:#80ff40"></div>
<svg style="left:0px;top:0px;" width="1000" height="800" viewBox="0 0 1000 800"><path d="M27.800 168.3H888" stroke="#ac5252" stroke-width="1.4" stroke-dasharray="16 5.060" fill="none"/></svg>
<div style="left:28px;top:156px;width:24px;height:11.900000000000006px;background:#8c1a1a"></div>
<span class="t" style="left:29.3px;top:157.29px;font-size:11px;color:#f4ecec;transform:scaleX(0.7493);transform-origin:0 0;">P90%</span>
<svg style="left:0px;top:0px;" width="1000" height="800" viewBox="0 0 1000 800"><path d="M27.800 486.85H888" stroke="#ac5252" stroke-width="1.4" stroke-dasharray="16 5.060" fill="none"/></svg>
<div style="left:28px;top:475px;width:24px;height:11.450000000000045px;background:#8c1a1a"></div>
<span class="t" style="left:29.3px;top:476.29px;font-size:11px;color:#f4ecec;transform:scaleX(0.7493);transform-origin:0 0;">P10%</span>
<svg style="left:0px;top:0px;" width="1000" height="800" viewBox="0 0 1000 800"><path d="M106.400 70.500V570" stroke="#186018" stroke-width="1.2" stroke-dasharray="15.300 5.800" fill="none"/></svg>
<div style="left:106px;top:570px;width:6px;height:11.5px;background:#0c4010"></div>
<span class="t" style="left:106.9px;top:571.78px;font-size:9px;color:#c8e8c8;font-weight:bold;">T</span>
<div style="left:28px;top:322px;width:10.5px;height:11.5px;background:#0c4010"></div>
<span class="t" style="left:29.3px;top:323.29px;font-size:11px;color:#e8ffe8;transform:scaleX(0.6775);transform-origin:0 0;">L&gt;</span>
<div style="left:25px;top:586px;width:870px;height:1px;background:#c8c4b4"></div>
<div style="left:25px;top:586px;width:1px;height:64px;background:#c8c2ae"></div>
<div style="left:26px;top:587px;width:866px;height:62px;background:#e8ffff"></div>
<div style="left:892px;top:586px;width:1px;height:64px;background:#aca899"></div>
<div style="left:893px;top:586px;width:1px;height:64px;background:#b8b4a4"></div>
<div style="left:894px;top:586px;width:2px;height:65px;background:#fff"></div>
<div style="left:25px;top:649px;width:869px;height:1px;background:#aca899"></div>
<div style="left:25px;top:650px;width:871px;height:1px;background:#fff"></div>
<div style="left:36px;top:588px;width:2px;height:59px;background:#0808ff"></div>
<svg style="left:0px;top:0px;" width="1000" height="800" viewBox="0 0 1000 800"><path d="M28.0,617.7 L31.0,616.8 L34.0,615.9 L37.0,615.0 L40.0,613.8 L43.0,612.9 L46.0,611.9 L49.0,611.2 L52.0,610.0 L55.0,609.1 L58.0,608.2 L61.0,607.4 L64.0,606.7 L67.0,605.8 L70.0,604.9 L73.0,604.2 L76.0,603.4 L79.0,602.5 L82.0,601.7 L85.0,601.3 L88.0,600.6 L91.0,599.7 L94.0,599.3 L97.0,598.7 L100.0,598.1 L103.0,597.6 L106.0,597.1 L109.0,596.7 L112.0,596.4 L115.0,596.1 L118.0,596.0 L121.0,595.5 L124.0,595.5 L127.0,595.1 L130.0,595.1 L133.0,595.1 L136.0,595.1 L139.0,595.0 L142.0,594.9 L145.0,595.1 L148.0,595.2 L151.0,595.6 L154.0,595.6 L157.0,595.9 L160.0,596.4 L163.0,596.4 L166.0,596.9 L169.0,597.5 L172.0,597.9 L175.0,598.2 L178.0,598.7 L181.0,599.3 L184.0,600.2 L187.0,600.6 L190.0,601.4 L193.0,602.2 L196.0,602.7 L199.0,603.5 L202.0,604.5 L205.0,605.2 L208.0,605.9 L211.0,606.9 L214.0,607.6 L217.0,608.5 L220.0,609.3 L223.0,610.5 L226.0,611.5 L229.0,612.4 L232.0,613.4 L235.0,614.1 L238.0,615.1 L241.0,616.2 L244.0,617.3 L247.0,618.3 L250.0,619.1 L253.0,620.0 L256.0,621.1 L259.0,622.0 L262.0,623.1 L265.0,623.9 L268.0,625.0 L271.0,625.9 L274.0,626.8 L277.0,627.7 L280.0,628.5 L283.0,629.3 L286.0,630.1 L289.0,630.9 L292.0,631.8 L295.0,632.3 L298.0,633.1 L301.0,633.9 L304.0,634.4 L307.0,635.0 L310.0,635.6 L313.0,636.3 L316.0,636.8 L319.0,637.4 L322.0,637.9 L325.0,638.3 L328.0,638.5 L331.0,638.7 L334.0,639.0 L337.0,639.4 L340.0,639.7 L343.0,639.7 L346.0,639.8 L349.0,639.9 L352.0,640.0 L355.0,640.0 L358.0,640.0 L361.0,640.0 L364.0,639.8 L367.0,639.4 L370.0,639.4 L373.0,639.0 L376.0,638.8 L379.0,638.4 L382.0,638.1 L385.0,637.5 L388.0,637.1 L391.0,636.6 L394.0,636.0 L397.0,635.7 L400.0,635.0 L403.0,634.3 L406.0,633.6 L409.0,633.1 L412.0,632.2 L415.0,631.4 L418.0,630.8 L421.0,629.9 L424.0,629.2 L427.0,628.1 L430.0,627.3 L433.0,626.5 L436.0,625.6 L439.0,624.7 L442.0,623.5 L445.0,622.6 L448.0,621.6 L451.0,620.7 L454.0,619.9 L457.0,618.8 L460.0,618.0 L463.0,616.8 L466.0,616.0 L469.0,614.9 L472.0,613.8 L475.0,613.0 L478.0,612.1 L481.0,610.9 L484.0,610.1 L487.0,609.2 L490.0,608.2 L493.0,607.4 L496.0,606.4 L499.0,605.6 L502.0,604.8 L505.0,604.1 L508.0,603.3 L511.0,602.5 L514.0,601.7 L517.0,601.1 L520.0,600.5 L523.0,599.8 L526.0,599.2 L529.0,598.6 L532.0,598.3 L535.0,597.7 L538.0,597.1 L541.0,596.7 L544.0,596.4 L547.0,596.2 L550.0,595.9 L553.0,595.5 L556.0,595.3 L559.0,595.3 L562.0,595.1 L565.0,595.0 L568.0,594.9 L571.0,595.1 L574.0,595.0 L577.0,595.2 L580.0,595.2 L583.0,595.4 L586.0,595.8 L589.0,596.1 L592.0,596.2 L595.0,596.5 L598.0,597.0 L601.0,597.3 L604.0,597.7 L607.0,598.5 L610.0,598.9 L613.0,599.5 L616.0,600.0 L619.0,600.8 L622.0,601.3 L625.0,602.0 L628.0,602.6 L631.0,603.6 L634.0,604.4 L637.0,605.3 L640.0,605.8 L643.0,606.9 L646.0,607.7 L649.0,608.6 L652.0,609.4 L655.0,610.4 L658.0,611.4 L661.0,612.4 L664.0,613.2 L667.0,614.2 L670.0,615.3 L673.0,616.3 L676.0,617.1 L679.0,618.0 L682.0,619.3 L685.0,620.3 L688.0,621.1 L691.0,621.9 L694.0,623.1 L697.0,623.9 L700.0,625.0 L703.0,625.8 L706.0,626.8 L709.0,627.5 L712.0,628.6 L715.0,629.2 L718.0,630.1 L721.0,631.0 L724.0,631.8 L727.0,632.4 L730.0,633.1 L733.0,633.8 L736.0,634.5 L739.0,635.1 L742.0,635.6 L745.0,636.2 L748.0,636.9 L751.0,637.4 L754.0,637.6 L757.0,638.2 L760.0,638.6 L763.0,638.7 L766.0,639.2 L769.0,639.3 L772.0,639.6 L775.0,639.8 L778.0,639.9 L781.0,639.9 L784.0,640.0 L787.0,640.0 L790.0,639.9 L793.0,639.9 L796.0,639.7 L799.0,639.5 L802.0,639.2 L805.0,639.1 L808.0,638.7 L811.0,638.3 L814.0,638.1 L817.0,637.7 L820.0,637.1 L823.0,636.6 L826.0,636.1 L829.0,635.4 L832.0,634.8 L835.0,634.3 L838.0,633.5 L841.0,632.9 L844.0,632.2 L847.0,631.3 L850.0,630.7 L853.0,629.7 L856.0,629.1 L859.0,628.3 L862.0,627.3 L865.0,626.3 L868.0,625.5 L871.0,624.5 L874.0,623.8 L877.0,622.6 L880.0,621.8 L883.0,620.9 L886.0,619.9 L889.0,618.9 L892.0,617.7" fill="none" stroke="#a03434" stroke-width="1.1"/></svg>
<svg style="left:0px;top:0px;" width="1000" height="800" viewBox="0 0 1000 800"><path d="M114.5 588V636" stroke="#186018" stroke-width="1.2" stroke-dasharray="15.6 5.6" fill="none"/></svg>
<div style="left:114px;top:635px;width:6px;height:11.5px;background:#0c4010"></div>
<span class="t" style="left:114.9px;top:636.78px;font-size:9px;color:#c8e8c8;font-weight:bold;">T</span>
<div style="left:899px;top:71px;width:71px;height:37px;background:#ece9d8;border-top:1px solid #aca899;border-left:1px solid #aca899;border-bottom:1px solid #fff;border-right:1px solid #fff"></div>
<div style="left:899px;top:110px;width:71px;height:148px;background:#ece9d8;border-top:1px solid #aca899;border-left:1px solid #aca899;border-bottom:1px solid #fff;border-right:1px solid #fff"></div>
<div style="left:934px;top:111px;width:1px;height:146px;background:#dedacc"></div>
<div style="left:935px;top:111px;width:1px;height:146px;background:#fff"></div>
<div style="left:903px;top:113px;width:29px;height:12px;background:#800000"></div>
<div style="left:938px;top:113px;width:29px;height:12px;background:#000080"></div>
<span class="t" style="left:914.3px;top:114.17px;font-size:11.5px;color:#fff;font-weight:bold;">1</span>
<span class="t" style="left:949.3px;top:114.17px;font-size:11.5px;color:#fff;font-weight:bold;">2</span>
<svg style="left:0px;top:0px;" width="1" height="1" viewBox="0 0 1 1"><defs><linearGradient id="gb" x1="0" y1="0" x2="1" y2="0"><stop offset="0" stop-color="#8cb8f0"/><stop offset=".3" stop-color="#b8d4f8"/><stop offset=".5" stop-color="#f0f6ff"/><stop offset=".7" stop-color="#b0d0f8"/><stop offset="1" stop-color="#90bcf4"/></linearGradient><linearGradient id="go" x1="0" y1="0" x2="1" y2="0"><stop offset="0" stop-color="#fff0dc"/><stop offset=".5" stop-color="#f8a040"/><stop offset="1" stop-color="#f08020"/></linearGradient><linearGradient id="gbv" x1="0" y1="0" x2="0" y2="1"><stop offset="0" stop-color="#8cb8f0"/><stop offset=".3" stop-color="#b8d4f8"/><stop offset=".5" stop-color="#f0f6ff"/><stop offset=".7" stop-color="#b0d0f8"/><stop offset="1" stop-color="#90bcf4"/></linearGradient><linearGradient id="gov" x1="0" y1="0" x2="1" y2="0"><stop offset="0" stop-color="#fff0dc"/><stop offset="1" stop-color="#f89838"/></linearGradient></defs></svg>
<svg style="left:907px;top:84px;" width="21" height="12" viewBox="0 0 21 12"><path d="M.5 4h5v-3.500l5 5.500-5 5.500v-3.500h-5z" fill="url(#gov)" stroke="#202428" stroke-width="1" stroke-linejoin="miter"/><path d="M20.500 4h-5v-3.500l-5 5.500 5 5.500v-3.500h5z" fill="#f8a858" stroke="#202428" stroke-width="1" stroke-linejoin="miter"/></svg>
<svg style="left:942px;top:84px;" width="22" height="12" viewBox="0 0 22 12"><path d="M.7 6l5.300-5.500v3.500h10v-3.500l5.300 5.500-5.300 5.500v-3.500h-10v3.500z" fill="url(#gbv)" stroke="#202428" stroke-width="1" stroke-linejoin="miter"/></svg>
<svg style="left:912px;top:133.5px;" width="12" height="21" viewBox="0 0 12 21"><path d="M6 .7l5.500 5.300h-3.500v9h3.500l-5.500 5.300-5.500-5.300h3.500v-9h-3.500z" fill="url(#gb)" stroke="#202428" stroke-width="1" stroke-linejoin="miter"/></svg>
<svg style="left:912px;top:161px;" width="12" height="21" viewBox="0 0 12 21"><path d="M4 .5h4v4.500h3.500l-5.500 5.500-5.500-5.500h3.500z" fill="#f8a050" stroke="#202428" stroke-width="1" stroke-linejoin="miter"/><path d="M4 20.500h4v-4.500h3.500l-5.500-5.500-5.500 5.500h3.500z" fill="#fcc088" stroke="#202428" stroke-width="1" stroke-linejoin="miter"/></svg>
<svg style="left:912px;top:198.5px;" width="12" height="16" viewBox="0 0 12 16"><path d="M6 .7l5.500 5.800h-3.300v9h-4.400v-9h-3.300z" fill="url(#go)" stroke="#202428" stroke-width="1" stroke-linejoin="miter"/></svg>
<svg style="left:915.8px;top:219px;" width="4.4" height="7" viewBox="0 0 4.4 7"><path d="M2.200 0l2.200 2.500h-1v4.500h-2.400v-4.500h-1z" fill="#f8a048"/><path d="M2.200 2.5v4.500" stroke="#ece9d8" stroke-width=".6"/></svg>
<svg style="left:915.8px;top:228px;" width="4.4" height="7" viewBox="0 0 4.4 7"><path d="M2.200 7l2.200-2.500h-1v-4.500h-2.400v4.500h-1z" fill="#4878a8"/><path d="M2.200 0v4.500" stroke="#ece9d8" stroke-width=".6"/></svg>
<svg style="left:912px;top:239.5px;" width="12" height="16" viewBox="0 0 12 16"><path d="M6 15.300l5.500-5.800h-3.300v-9h-4.400v9h-3.300z" fill="url(#gb)" stroke="#202428" stroke-width="1" stroke-linejoin="miter"/></svg>
<svg style="left:947px;top:133.5px;" width="12" height="21" viewBox="0 0 12 21"><path d="M6 .7l5.500 5.300h-3.500v9h3.500l-5.500 5.300-5.500-5.300h3.500v-9h-3.500z" fill="url(#gb)" stroke="#202428" stroke-width="1" stroke-linejoin="miter"/></svg>
<svg style="left:947px;top:161px;" width="12" height="21" viewBox="0 0 12 21"><path d="M4 .5h4v4.500h3.500l-5.500 5.500-5.500-5.500h3.500z" fill="#f8a050" stroke="#202428" stroke-width="1" stroke-linejoin="miter"/><path d="M4 20.500h4v-4.500h3.500l-5.500-5.500-5.500 5.500h3.500z" fill="#fcc088" stroke="#202428" stroke-width="1" stroke-linejoin="miter"/></svg>
<svg style="left:947px;top:198.5px;" width="12" height="16" viewBox="0 0 12 16"><path d="M6 .7l5.500 5.800h-3.300v9h-4.400v-9h-3.300z" fill="url(#go)" stroke="#202428" stroke-width="1" stroke-linejoin="miter"/></svg>
<svg style="left:950.8px;top:219px;" width="4.4" height="7" viewBox="0 0 4.4 7"><path d="M2.200 0l2.200 2.500h-1v4.500h-2.400v-4.500h-1z" fill="#f8a048"/><path d="M2.200 2.5v4.500" stroke="#ece9d8" stroke-width=".6"/></svg>
<svg style="left:950.8px;top:228px;" width="4.4" height="7" viewBox="0 0 4.4 7"><path d="M2.200 7l2.200-2.500h-1v-4.500h-2.400v4.500h-1z" fill="#4878a8"/><path d="M2.200 0v4.500" stroke="#ece9d8" stroke-width=".6"/></svg>
<svg style="left:947px;top:239.5px;" width="12" height="16" viewBox="0 0 12 16"><path d="M6 15.300l5.500-5.800h-3.300v-9h-4.400v9h-3.300z" fill="url(#gb)" stroke="#202428" stroke-width="1" stroke-linejoin="miter"/></svg>
<div style="left:25px;top:653px;width:315px;height:1px;background:#aca899"></div>
<div style="left:26px;top:654px;width:313px;height:1px;background:#fff"></div>
<div style="left:25px;top:653px;width:1px;height:113px;background:#aca899"></div>
<div style="left:26px;top:654px;width:1px;height:112px;background:#fff"></div>
<div style="left:338px;top:654px;width:1px;height:113px;background:#fff"></div>
<div style="left:339px;top:653px;width:2px;height:114px;background:#b4b0a0"></div>
<div style="left:25px;top:765px;width:315px;height:1px;background:#aca899"></div>
<div style="left:25px;top:766px;width:870px;height:2px;background:#fff"></div>
<div style="left:342px;top:653px;width:2px;height:114px;background:#fff"></div>
<div style="left:344px;top:653px;width:80px;height:1px;background:#aca899"></div>
<div style="left:344px;top:654px;width:80px;height:1px;background:#fff"></div>
<div style="left:344px;top:765px;width:80px;height:1px;background:#aca899"></div>
<div style="left:27px;top:658.5px;width:311px;height:1px;background:#f8f7f0"></div>
<div style="left:344px;top:658.5px;width:80px;height:1px;background:#f8f7f0"></div>
<div style="left:32px;top:654px;width:45px;height:6px;background:#ece9d8"></div>
<div style="left:349px;top:654px;width:41px;height:6px;background:#ece9d8"></div>
<span class="t" style="left:33.5px;top:653.79px;font-size:11px;color:#000;transform:scaleX(0.8379);transform-origin:0 0;">Horizontal</span>
<span class="t" style="left:350px;top:653.79px;font-size:11px;color:#000;transform:scaleX(0.8398);transform-origin:0 0;">Vertical 1</span>
<div style="left:33.5px;top:665px;width:297px;height:3px;background:linear-gradient(#a8a494,#c4c0b0);border-radius:1px"></div>
<div style="left:351px;top:664.5px;width:75px;height:3px;background:#800000"></div>
<div style="left:47px;top:671px;width:271px;height:18px;background:#ece9d8;border-top:1px solid #b0ac9c;border-left:1px solid #b0ac9c;border-bottom:1px solid #fbfaf5;border-right:1px solid #fbfaf5"></div>
<div style="left:47px;top:692px;width:271px;height:18px;background:#ece9d8;border-top:1px solid #b0ac9c;border-left:1px solid #b0ac9c;border-bottom:1px solid #fbfaf5;border-right:1px solid #fbfaf5"></div>
<span class="t" style="left:49.6px;top:673.29px;font-size:11px;color:#000;transform:scaleX(0.9286);transform-origin:0 0;">100 мкс/д</span>
<span class="t" style="left:49.6px;top:694.29px;font-size:11px;color:#000;transform:scaleX(0.898);transform-origin:0 0;">410 мкс</span>
<div style="left:364px;top:671px;width:60px;height:18px;background:#ece9d8;border-top:1px solid #b0ac9c;border-left:1px solid #b0ac9c;border-bottom:1px solid #fbfaf5;border-right:1px solid #fbfaf5"></div>
<div style="left:364px;top:692px;width:60px;height:18px;background:#ece9d8;border-top:1px solid #b0ac9c;border-left:1px solid #b0ac9c;border-bottom:1px solid #fbfaf5;border-right:1px solid #fbfaf5"></div>
<span class="t" style="left:366px;top:673.29px;font-size:11px;color:#000;transform:scaleX(0.8953);transform-origin:0 0;">100 мВ/д</span>
<span class="t" style="left:366px;top:694.29px;font-size:11px;color:#000;transform:scaleX(0.7871);transform-origin:0 0;">0 В</span>
<div style="left:27px;top:713px;width:311px;height:1px;background:#aca899"></div>
<div style="left:27px;top:714px;width:311px;height:1px;background:#fff"></div>
<div style="left:344px;top:713px;width:80px;height:1px;background:#aca899"></div>
<div style="left:344px;top:714px;width:80px;height:1px;background:#fff"></div>
<div style="left:137px;top:715px;width:27px;height:26px;background:#f6f4ec;border:1px solid #fff;border-top-color:#d0ccbc;border-left-color:#d0ccbc"></div>
<span class="t" style="left:38.7px;top:748.29px;font-size:11px;color:#000;transform:scaleX(0.8523);transform-origin:0 0;">Курсор 1</span>
<div style="left:82px;top:745px;width:235px;height:18px;background:#ece9d8;border-top:1px solid #b0ac9c;border-left:1px solid #b0ac9c;border-bottom:1px solid #fbfaf5;border-right:1px solid #fbfaf5"></div>
<span class="t" style="left:85px;top:748.29px;font-size:11px;color:#000;transform:scaleX(0.8795);transform-origin:0 0;">-91 мкс</span>
<div style="left:317px;top:744.5px;width:18px;height:18px;background:#ece9d8;border:1px solid #fff;border-right:1.500px solid #716f64;border-bottom:1.500px solid #716f64"></div>
<svg style="left:323px;top:752.5px;" width="6" height="3.5" viewBox="0 0 6 3.5"><path d="M0 0h6l-3 3.500z" fill="#000"/></svg>
<span class="t" style="left:355.6px;top:748.99px;font-size:11px;color:#000;transform:scaleX(0.8501);transform-origin:0 0;">Курсор 1</span>
<div style="left:399px;top:745px;width:30px;height:18px;background:#ece9d8;border-top:1px solid #b0ac9c;border-left:1px solid #b0ac9c;border-bottom:1px solid #fbfaf5;border-right:1px solid #fbfaf5"></div>
<span class="t" style="left:402px;top:748.99px;font-size:11px;color:#000;transform:scaleX(0.8624);transform-origin:0 0;">-391</span>
<div style="left:29px;top:773px;width:866px;height:1px;background:#9c9888"></div>
<div style="left:29px;top:774px;width:866px;height:1px;background:#c8c4b4"></div>
<div style="left:29px;top:773px;width:1px;height:7px;background:#9c9888"></div>
<div style="left:30px;top:775px;width:20px;height:3px;background:#fff"></div>
<div style="left:50px;top:775px;width:845px;height:3px;background:#2c64c8"></div>
<div style="left:50px;top:774.5px;width:845px;height:1px;background:#88a0d0"></div>
<div style="left:29px;top:778px;width:866px;height:2px;background:#fff"></div>
<div style="left:24px;top:786px;width:951px;height:1px;background:#c8c4b4"></div>
<div style="left:25.5px;top:787px;width:23px;height:13px;background:#00f0f0"></div>
<svg style="left:28px;top:787px;" width="18" height="13" viewBox="0 0 18 13"><path d="M5 4l4-3 5 3-4 3z" fill="none" stroke="#f0e020" stroke-width="1.500"/><path d="M7 3l4 3" stroke="#30c030" stroke-width="1.500"/><path d="M3 10q4-3 12-1v4h-12z" fill="#e07820"/><path d="M2 9h5v4h-5z" fill="#404858"/></svg>
<div style="left:49px;top:787px;width:87px;height:1px;background:#aca899"></div>
<div style="left:49px;top:787px;width:1px;height:13px;background:#aca899"></div>
<div style="left:135.5px;top:787px;width:1px;height:13px;background:#fff"></div>
<div style="left:138px;top:787px;width:300px;height:1px;background:#aca899"></div>
<div style="left:138px;top:787px;width:1px;height:13px;background:#aca899"></div>
<svg style="left:0px;top:0px;" width="1" height="1" viewBox="0 0 1 1"><defs><linearGradient id="tl" x1="0" y1="0" x2="0" y2="1"><stop offset="0" stop-color="#289898"/><stop offset=".5" stop-color="#98d0d0"/><stop offset="1" stop-color="#289898"/></linearGradient><linearGradient id="tlv" x1="0" y1="0" x2="1" y2="0"><stop offset="0" stop-color="#289898"/><stop offset=".5" stop-color="#a8d8d8"/><stop offset="1" stop-color="#289898"/></linearGradient><linearGradient id="gr" x1="0" y1="0" x2="0" y2="1"><stop offset="0" stop-color="#60c048"/><stop offset=".5" stop-color="#a8e890"/><stop offset="1" stop-color="#70c858"/></linearGradient><radialGradient id="lens" cx=".4" cy=".35" r=".7"><stop offset="0" stop-color="#fff"/><stop offset="1" stop-color="#a8c8f0"/></radialGradient></defs></svg>
<svg style="left:30px;top:674px;" width="14" height="14" viewBox="0 0 14 14"><path d="M8.500 8.500l4.500 4.500" stroke="#70747c" stroke-width="2.200" stroke-linecap="round"/><circle cx="5.500" cy="5.500" r="4.700" fill="url(#lens)" stroke="#b0c0dc" stroke-width="1"/></svg>
<svg style="left:347px;top:674px;" width="14" height="14" viewBox="0 0 14 14"><path d="M8.500 8.500l4.500 4.500" stroke="#70747c" stroke-width="2.200" stroke-linecap="round"/><circle cx="5.500" cy="5.500" r="4.700" fill="url(#lens)" stroke="#b0c0dc" stroke-width="1"/></svg>
<svg style="left:30px;top:696px;" width="14" height="12" viewBox="0 0 14 12"><path d="M.5 3.500h6.500v-3l6.500 5.500-6.500 5.500v-3h-6.500z" fill="url(#gr)" stroke="#d8f0d0" stroke-width=".6"/></svg>
<svg style="left:347.5px;top:695px;" width="13" height="14" viewBox="0 0 13 14"><path d="M3.500 13.500v-6.500h-3l6-6.500 6 6.500h-3v6.500z" fill="url(#gr)" stroke="#d8f0d0" stroke-width=".6"/></svg>
<svg style="left:31px;top:718.5px;" width="21" height="19" viewBox="0 0 21 19"><path d="M2.500 1v18M0 16.500h20" stroke="#38a848" stroke-width="1.100"/><path d="M6 14v4M10 14v4M14 14v4M18 14v4M.5 4h4M.5 8h4M.5 12h4" stroke="#a8d8b0" stroke-width=".8"/><circle cx="2.500" cy="2" r="1.300" fill="#209030"/><circle cx="19" cy="16.500" r="1.300" fill="#209030"/><path d="M.5 9.500l9.500-9.500v4.500h9.500v10h-9.500v4.500z" fill="url(#tl)" stroke="#188080" stroke-width=".8" opacity=".92"/></svg>
<svg style="left:58px;top:718.5px;" width="21" height="19" viewBox="0 0 21 19"><path d="M2.500 1v18M0 16.500h20" stroke="#38a848" stroke-width="1.100"/><path d="M6 14v4M10 14v4M14 14v4M18 14v4M.5 4h4M.5 8h4M.5 12h4" stroke="#a8d8b0" stroke-width=".8"/><circle cx="2.500" cy="2" r="1.300" fill="#209030"/><circle cx="19" cy="16.500" r="1.300" fill="#209030"/><path d="M20.500 9.500l-9.500-9.500v4.500h-9.500v10h9.500v4.500z" fill="url(#tl)" stroke="#188080" stroke-width=".8" opacity=".92"/></svg>
<svg style="left:85.5px;top:718px;" width="21" height="20" viewBox="0 0 21 20"><path d="M2.500 3v15M1 16.500h18" stroke="#30a040" stroke-width="1.400"/><circle cx="2.500" cy="3" r="1.300" fill="#209030"/><path d="M6 17l2-2v1h8v-1l2.500 2-2.500 2v-1h-8v1z" fill="#a8e0e0" stroke="#289898" stroke-width=".7"/><path d="M2 17.500l6-5.500" stroke="#d08020" stroke-width="2.200" stroke-linecap="round"/><circle cx="12.500" cy="7" r="6.600" fill="#dce4f0" stroke="#a8b0c8" stroke-width="1"/><path d="M6.500 4.500q6-7.500 12 0z" fill="#6890e0" opacity=".8"/><path d="M12.500 2.500v9M8 7h9" stroke="#f02828" stroke-width="3"/><path d="M12.500 3.500v3.500M10 7h5" stroke="#f8c040" stroke-width="1.200"/></svg>
<svg style="left:112.5px;top:718px;" width="21" height="20" viewBox="0 0 21 20"><path d="M2.500 3v15M1 16.500h18" stroke="#30a040" stroke-width="1.400"/><circle cx="2.500" cy="3" r="1.300" fill="#209030"/><path d="M6 17l2-2v1h8v-1l2.500 2-2.500 2v-1h-8v1z" fill="#a8e0e0" stroke="#289898" stroke-width=".7"/><path d="M2 17.500l6-5.500" stroke="#d08020" stroke-width="2.200" stroke-linecap="round"/><circle cx="12.500" cy="7" r="6.600" fill="#dce4f0" stroke="#a8b0c8" stroke-width="1"/><path d="M6.500 4.500q6-7.500 12 0z" fill="#6890e0" opacity=".8"/><path d="M8.500 7h8" stroke="#1828a0" stroke-width="2.600"/></svg>
<svg style="left:140.5px;top:718px;" width="21" height="20" viewBox="0 0 21 20"><path d="M2.500 3v15M1 16.500h18" stroke="#30a040" stroke-width="1.400"/><circle cx="2.500" cy="3" r="1.300" fill="#209030"/><circle cx="18.500" cy="16.500" r="1.300" fill="#209030"/><circle cx="12" cy="7.500" r="6.300" fill="#e8d0b0" stroke="#b0b4c8" stroke-width="1"/><path d="M6.200 5.500q5.800-7 11.600 0z" fill="#8098d8" opacity=".8"/><rect x="5" y="3.500" width="14" height="10" fill="#e8c898" fill-opacity=".5" stroke="#603010" stroke-width="1.300" stroke-dasharray="2.500 1.500"/><path d="M1.500 18l6-5.500" stroke="#d08020" stroke-width="2.200" stroke-linecap="round"/></svg>
<svg style="left:167px;top:717.5px;" width="21" height="21" viewBox="0 0 21 21"><path d="M2.500 3v15M1 16.500h18" stroke="#30a040" stroke-width="1.400"/><circle cx="18.500" cy="16.500" r="1.300" fill="#209030"/><circle cx="12" cy="7" r="6.300" fill="#dce4f0" stroke="#a8b0c8" stroke-width="1"/><path d="M6.200 5q5.800-7 11.600 0z" fill="#6890e0" opacity=".8"/><path d="M4 4l13 14M18 3l-15 15" stroke="#e84848" stroke-width="4" stroke-linecap="round"/><path d="M4 4l13 14M18 3l-15 15" stroke="#e8c0c0" stroke-width="2" stroke-linecap="round"/></svg>
<svg style="left:322px;top:672.5px;" width="12" height="14" viewBox="0 0 12 14"><rect x="4" y="0" width="4" height="3" fill="#404040"/><rect x="5" y=".8" width="2" height="1.200" fill="#d0d040"/><rect x="2" y="3" width="8" height="6.500" rx="1" fill="#686c70" stroke="#202020" stroke-width=".7"/><rect x="4" y="4.500" width="2" height="4" fill="#d0d0d0"/><rect x="6.500" y="4.500" width="1.500" height="2" fill="#e04020"/><rect x="6.500" y="6.500" width="1.500" height="2" fill="#40b040"/><path d="M.5 10.500h11M1 13h10" stroke="#181818" stroke-width="1.300"/><rect x="2" y="11" width="8" height="1.500" fill="#b0b0b0"/></svg>
<svg style="left:322px;top:693.5px;" width="12" height="14" viewBox="0 0 12 14"><rect x="4" y="0" width="4" height="3" fill="#404040"/><rect x="5" y=".8" width="2" height="1.200" fill="#d0d040"/><rect x="2" y="3" width="8" height="6.500" rx="1" fill="#686c70" stroke="#202020" stroke-width=".7"/><rect x="4" y="4.500" width="2" height="4" fill="#d0d0d0"/><rect x="6.500" y="4.500" width="1.500" height="2" fill="#e04020"/><rect x="6.500" y="6.500" width="1.500" height="2" fill="#40b040"/><path d="M.5 10.500h11M1 13h10" stroke="#181818" stroke-width="1.300"/><rect x="2" y="11" width="8" height="1.500" fill="#b0b0b0"/></svg>
<svg style="left:348px;top:718.5px;" width="20" height="19" viewBox="0 0 20 19"><path d="M2.500 1v18M0 15.500h20" stroke="#30a040" stroke-width="1.400"/><path d="M6 13v4M10 13v4M14 13v4M18 13v4M.5 4h4M.5 8h4M.5 12h4" stroke="#a8d8b0" stroke-width=".8"/><circle cx="2.500" cy="2" r="1.300" fill="#209030"/><circle cx="19" cy="15.500" r="1.300" fill="#209030"/><path d="M10 18l-8.500-9h4.500v-8.500h8v8.500h4.500z" fill="url(#tlv)" stroke="#188080" stroke-width=".8" opacity=".92"/></svg>
<svg style="left:375px;top:718.5px;" width="20" height="19" viewBox="0 0 20 19"><path d="M2.500 1v18M0 15.500h20" stroke="#30a040" stroke-width="1.400"/><path d="M6 13v4M10 13v4M14 13v4M18 13v4M.5 4h4M.5 8h4M.5 12h4" stroke="#a8d8b0" stroke-width=".8"/><circle cx="2.500" cy="2" r="1.300" fill="#209030"/><circle cx="19" cy="15.500" r="1.300" fill="#209030"/><path d="M10 .5l-8.500 9h4.500v8.500h8v-8.500h4.500z" fill="url(#tlv)" stroke="#188080" stroke-width=".8" opacity=".92"/></svg>
<svg style="left:402px;top:718px;" width="21" height="20" viewBox="0 0 21 20"><path d="M1 16.500h18" stroke="#30a040" stroke-width="1.400"/><path d="M3 1l2.500 3h-1.500v7h1.500l-2.500 3-2.500-3h1.500v-7h-1.500z" fill="#a8e0e0" stroke="#289898" stroke-width=".7"/><path d="M2 17.500l6-5.500" stroke="#d08020" stroke-width="2.200" stroke-linecap="round"/><circle cx="13" cy="7" r="6" fill="#dce4f0" stroke="#a8b0c8" stroke-width="1"/><path d="M7.500 5q5.500-7 11 0z" fill="#6890e0" opacity=".8"/><path d="M13 3v8M9 7h8" stroke="#f02828" stroke-width="2.400"/></svg>
<div style="left:419px;top:352px;width:560px;height:448px;background:#ece9d8;border-radius:7px 7px 0 0"></div>
<div style="left:419px;top:352px;width:560px;height:26px;background:linear-gradient(#0a4cd4 0%,#2f85fb 5%,#3a8fff 10%,#0a66ee 16%,#0357e2 22%,#0054e0 55%,#0460ea 66%,#0468f6 76%,#0567f5 90%,#0a58e4 94%,#0038c8 98%,#0036c4 100%);border-radius:7px 7px 0 0"></div>
<div style="left:419px;top:378px;width:3px;height:422px;background:linear-gradient(90deg,#0a3ad8,#2262f0 50%,#1c5cec)"></div>
<div style="left:975.5px;top:378px;width:3.5px;height:422px;background:linear-gradient(90deg,#1440dc,#0020c0 60%,#001aa8)"></div>
<svg style="left:424px;top:358.5px;" width="14" height="14" viewBox="0 0 14 14"><rect x="2" y="1.500" width="9" height="7.500" rx="1" fill="#4090d0" stroke="#98b0d8" stroke-width="1" transform="rotate(-12 6 5)"/><path d="M4 4l3 2 2-3" stroke="#d03040" stroke-width="1.200" fill="none"/><rect x="2" y="9" width="7" height="1.500" fill="#6a7080"/><path d="M7 13l5 0-3-4.500z" fill="#d03040"/></svg>
<span class="t" style="left:441px;top:359.80px;font-size:13px;color:#fff;font-weight:bold;transform:scaleX(0.8395);transform-origin:0 0;text-shadow:1px 1px 0 #0a3090">Модуль анализа</span>
<div style="left:956.5px;top:357px;width:18px;height:17.5px;background:linear-gradient(135deg,#f09070,#e05830 40%,#c83c18);border:1px solid #fff;border-radius:3px"></div>
<svg style="left:956.5px;top:357px;" width="18" height="17.5" viewBox="0 0 18 17.5"><path d="M5 4.500l8 8.500M13 4.500l-8 8.500" stroke="#fff" stroke-width="2.200"/></svg>
<div style="left:423px;top:405px;width:553px;height:1px;background:#b8b4a4"></div>
<div style="left:423px;top:406px;width:553px;height:1px;background:#fff"></div>
<div style="left:902px;top:379px;width:1px;height:26px;background:#aca899"></div>
<div style="left:904px;top:379px;width:1px;height:26px;background:#fff"></div>
<svg style="left:429px;top:385.5px;" width="14" height="13" viewBox="0 0 14 13"><rect x=".5" y=".5" width="13" height="12" fill="#e8f0fc" stroke="#5888d0" stroke-width="1"/><rect x="1" y="1" width="12" height="2" fill="#88b0e8"/><path d="M7 3.500l1.200 2.500 2.800.3-2 1.900.6 2.800-2.600-1.400-2.600 1.400.6-2.800-2-1.900 2.800-.3z" fill="#f8c830" stroke="#c89010" stroke-width=".4"/></svg>
<svg style="left:451.5px;top:384px;" width="16" height="16" viewBox="0 0 16 16"><path d="M1 1.500h11v12h-11z" fill="#9898d0" stroke="#505080" stroke-width=".8"/><path d="M1.500 2h3.500v11h-3.500z" fill="#c4c4ec"/><path d="M7.500 2h4v11h-4z" fill="#8484c0"/><path d="M6.200 3v10" stroke="#404070" stroke-width="1.400"/><path d="M5 4.500h3" stroke="#303060" stroke-width="1.200"/><path d="M2 14h9.500" stroke="#6c6c90" stroke-width="1"/></svg>
<svg style="left:472px;top:384px;" width="16" height="16" viewBox="0 0 16 16"><rect x="5.500" y=".3" width="4" height="14.700" fill="#f8e800" stroke="#403400" stroke-width=".6"/><rect x=".3" y="4" width="14.400" height="4.300" fill="#f8e800" stroke="#403400" stroke-width=".6"/><path d="M2 5.500v1.500M4 5.500v1.500M6 5.500v1.500M8 5.500v1.500M10 5.500v1.500M12 5.500v1.500M6.500 10h2M6.500 12h2M6.500 2h2M1.500 5h12" stroke="#101000" stroke-width="1.1"/></svg>
<svg style="left:493.5px;top:383.5px;" width="16" height="15.5" viewBox="0 0 16 15.5"><rect x=".5" y=".5" width="15" height="14.500" fill="#001800" stroke="#000" stroke-width="1"/><path d="M3 1v14M6 1v14M9 1v14M12 1v14M1 3.500h14M1 6.500h14M1 9.500h14M1 12.500h14" stroke="#10a010" stroke-width=".6"/><path d="M1.500 9q2.500-5 5 0t5-1 3-2" stroke="#d0f0d0" stroke-width="1.200" fill="none"/></svg>
<div style="left:910.5px;top:384.5px;width:14.5px;height:14.5px;background:#ece9d8;border:1.500px solid #94907e;border-right:1px solid #b8b4a4;border-bottom:1px solid #b8b4a4;box-shadow:1px 1px 0 #fff"></div>
<div style="left:932.5px;top:384.5px;width:14.5px;height:14.5px;background:#ece9d8;border:1.500px solid #94907e;border-right:1px solid #b8b4a4;border-bottom:1px solid #b8b4a4;box-shadow:1px 1px 0 #fff"></div>
<div style="left:954.5px;top:384.5px;width:14.5px;height:14.5px;background:#ece9d8;border:1.500px solid #94907e;border-right:1px solid #b8b4a4;border-bottom:1px solid #b8b4a4;box-shadow:1px 1px 0 #fff"></div>
<svg style="left:913px;top:387px;" width="10" height="10" viewBox="0 0 10 10"><path d="M5.500 0l-4 7h4z" fill="#b0b0b0"/><path d="M6 1.500l2.500 5.500h-2.500z" fill="#d0d0d0"/><path d="M1 7.500h8l-1.500 2h-5z" fill="#a0a0a0"/></svg>
<div style="left:936px;top:394px;width:7px;height:2px;background:#000"></div>
<svg style="left:957px;top:387px;" width="10" height="10" viewBox="0 0 10 10"><path d="M.5.5l9 9M9.500.5l-9 9" stroke="#000" stroke-width="1.300"/></svg>
<div style="left:425.5px;top:408px;width:86.0px;height:1px;background:#fff"></div>
<div style="left:424.5px;top:409px;width:1px;height:16px;background:#fff"></div>
<div style="left:511.5px;top:409px;width:1px;height:16px;background:#c4c0b0"></div>
<div style="left:512.5px;top:409px;width:1px;height:16px;background:#7c786a"></div>
<div style="left:515.5px;top:408px;width:76.0px;height:1px;background:#fff"></div>
<div style="left:514.5px;top:409px;width:1px;height:16px;background:#fff"></div>
<div style="left:591.5px;top:409px;width:1px;height:16px;background:#c4c0b0"></div>
<div style="left:592.5px;top:409px;width:1px;height:16px;background:#7c786a"></div>
<div style="left:595.5px;top:408px;width:97.5px;height:1px;background:#fff"></div>
<div style="left:594.5px;top:409px;width:1px;height:16px;background:#fff"></div>
<div style="left:693px;top:409px;width:1px;height:16px;background:#c4c0b0"></div>
<div style="left:694px;top:409px;width:1px;height:16px;background:#7c786a"></div>
<div style="left:697px;top:408px;width:83px;height:1px;background:#fff"></div>
<div style="left:696px;top:409px;width:1px;height:16px;background:#fff"></div>
<div style="left:780px;top:409px;width:1px;height:16px;background:#c4c0b0"></div>
<div style="left:781px;top:409px;width:1px;height:16px;background:#7c786a"></div>
<div style="left:784px;top:408px;width:81px;height:1px;background:#fff"></div>
<div style="left:783px;top:409px;width:1px;height:16px;background:#fff"></div>
<div style="left:865px;top:409px;width:1px;height:16px;background:#c4c0b0"></div>
<div style="left:866px;top:409px;width:1px;height:16px;background:#7c786a"></div>
<div style="left:869px;top:408px;width:104px;height:1px;background:#fff"></div>
<div style="left:868px;top:409px;width:1px;height:16px;background:#fff"></div>
<div style="left:973px;top:409px;width:1px;height:16px;background:#c4c0b0"></div>
<div style="left:974px;top:409px;width:1px;height:16px;background:#7c786a"></div>
<div style="left:425.5px;top:425.5px;width:85.0px;height:1px;background:#fff"></div>
<div style="left:424.5px;top:426.5px;width:1px;height:15.5px;background:#fff"></div>
<div style="left:510.5px;top:426.5px;width:1px;height:15.5px;background:#c4c0b0"></div>
<div style="left:511.5px;top:426.5px;width:1px;height:15.5px;background:#7c786a"></div>
<div style="left:514.5px;top:425.5px;width:73.0px;height:1px;background:#fff"></div>
<div style="left:513.5px;top:426.5px;width:1px;height:15.5px;background:#fff"></div>
<div style="left:587.5px;top:426.5px;width:1px;height:15.5px;background:#c4c0b0"></div>
<div style="left:588.5px;top:426.5px;width:1px;height:15.5px;background:#7c786a"></div>
<div style="left:652px;top:425.5px;width:83.5px;height:1px;background:#fff"></div>
<div style="left:651px;top:426.5px;width:1px;height:15.5px;background:#fff"></div>
<div style="left:735.5px;top:426.5px;width:1px;height:15.5px;background:#c4c0b0"></div>
<div style="left:736.5px;top:426.5px;width:1px;height:15.5px;background:#7c786a"></div>
<div style="left:739.5px;top:425.5px;width:83.5px;height:1px;background:#fff"></div>
<div style="left:738.5px;top:426.5px;width:1px;height:15.5px;background:#fff"></div>
<div style="left:823px;top:426.5px;width:1px;height:15.5px;background:#c4c0b0"></div>
<div style="left:824px;top:426.5px;width:1px;height:15.5px;background:#7c786a"></div>
<div style="left:827px;top:425.5px;width:77px;height:1px;background:#fff"></div>
<div style="left:826px;top:426.5px;width:1px;height:15.5px;background:#fff"></div>
<div style="left:904px;top:426.5px;width:1px;height:15.5px;background:#c4c0b0"></div>
<div style="left:905px;top:426.5px;width:1px;height:15.5px;background:#7c786a"></div>
<div style="left:908px;top:425.5px;width:65px;height:1px;background:#fff"></div>
<div style="left:907px;top:426.5px;width:1px;height:15.5px;background:#fff"></div>
<div style="left:973px;top:426.5px;width:1px;height:15.5px;background:#c4c0b0"></div>
<div style="left:974px;top:426.5px;width:1px;height:15.5px;background:#7c786a"></div>
<div style="left:589px;top:423.5px;width:62px;height:20px;background:#ece9d8"></div>
<div style="left:590px;top:423.5px;width:59px;height:1px;background:#fff"></div>
<div style="left:589px;top:424.5px;width:1px;height:19px;background:#fff"></div>
<div style="left:649.5px;top:424.5px;width:1px;height:18px;background:#aca899"></div>
<div style="left:650.5px;top:424.5px;width:1px;height:18px;background:#716f64"></div>
<div style="left:423px;top:442.5px;width:166px;height:1px;background:#fff"></div>
<div style="left:651px;top:442.5px;width:324px;height:1px;background:#fff"></div>
<div style="left:423px;top:443px;width:1px;height:357px;background:#fff"></div>
<div style="left:974px;top:443px;width:1px;height:357px;background:#aca899"></div>
<span class="t" style="left:455.6px;top:412.79px;font-size:11px;color:#1a1a1a;transform:scaleX(0.8735);transform-origin:0 0;">Эмуляция</span>
<span class="t" style="left:545.6px;top:412.79px;font-size:11px;color:#1a1a1a;transform:scaleX(0.8442);transform-origin:0 0;">Шаблон</span>
<span class="t" style="left:626px;top:412.79px;font-size:11px;color:#1a1a1a;transform:scaleX(0.9108);transform-origin:0 0;">Фильтрация</span>
<span class="t" style="left:727px;top:412.79px;font-size:11px;color:#1a1a1a;transform:scaleX(0.8537);transform-origin:0 0;">Эффекты</span>
<span class="t" style="left:815px;top:412.79px;font-size:11px;color:#1a1a1a;transform:scaleX(0.9269);transform-origin:0 0;">Функция</span>
<span class="t" style="left:899.4px;top:412.79px;font-size:11px;color:#1a1a1a;transform:scaleX(0.8782);transform-origin:0 0;">Сигнализация</span>
<span class="t" style="left:453px;top:428.79px;font-size:11px;color:#1a1a1a;transform:scaleX(0.894);transform-origin:0 0;">Измерения</span>
<span class="t" style="left:541.5px;top:428.79px;font-size:11px;color:#1a1a1a;transform:scaleX(0.8908);transform-origin:0 0;">Импульс</span>
<span class="t" style="left:619px;top:427.59px;font-size:11px;color:#1a1a1a;transform:scaleX(0.9191);transform-origin:0 0;">БПФ</span>
<span class="t" style="left:679.7px;top:428.79px;font-size:11px;color:#1a1a1a;transform:scaleX(0.8863);transform-origin:0 0;">Протоколы</span>
<span class="t" style="left:766px;top:428.79px;font-size:11px;color:#1a1a1a;transform:scaleX(0.8826);transform-origin:0 0;">Статистика</span>
<span class="t" style="left:854px;top:428.79px;font-size:11px;color:#1a1a1a;transform:scaleX(0.9149);transform-origin:0 0;">Формулы</span>
<span class="t" style="left:934.7px;top:428.79px;font-size:11px;color:#1a1a1a;transform:scaleX(0.8751);transform-origin:0 0;">Сводка</span>
<svg style="left:436px;top:410.5px;" width="14" height="13" viewBox="0 0 14 13"><path d="M4 4l3.500-3 4.500 3-3.500 3z" fill="none" stroke="#e8e020" stroke-width="1.400"/><path d="M6 1.500l4 3" stroke="#30c030" stroke-width="1.400"/><path d="M1 10q4-3 12-1.500v2q-6 2.500-12 1.500z" fill="#e88020"/><path d="M.5 8.500h3.500v4h-3.500z" fill="#485068"/><path d="M3 9.500q3-1.500 6 0" stroke="#f8d0a0" stroke-width="1" fill="none"/></svg>
<svg style="left:524px;top:410.5px;" width="16" height="14" viewBox="0 0 16 14"><circle cx="11" cy="4.500" r="4" fill="#c8ccd0" stroke="#a0a4ac" stroke-width=".8"/><circle cx="11" cy="4.500" r="1.800" fill="#e8e8ec"/><path d="M1.500 6q0-2 2.500-2h4l2 1.500v3l1 1.500-1 .5v3h-8.500z" fill="#f4c8a8" stroke="#181010" stroke-width="1"/><path d="M6 7h2M7 9v1" stroke="#181010" stroke-width="1"/></svg>
<svg style="left:605.5px;top:411.5px;" width="14" height="11.5" viewBox="0 0 14 11.5"><path d="M0 5.500h2l1-2 1 3.500 1-3 1 2h1" stroke="#e81818" stroke-width="1.200" fill="none"/><rect x="7" y="0" width="2.500" height="11.500" fill="#000"/><path d="M9.500 5h4.500" stroke="#e81818" stroke-width="1.200"/></svg>
<svg style="left:707px;top:412px;" width="15" height="10.5" viewBox="0 0 15 10.5"><path d="M1 7l3.500-7 3 7M2.500 5h4.500" stroke="#e01818" stroke-width="2.100" fill="none"/><path d="M8 3.500l3 6.500 3.500-6.500M9 6h5" stroke="#e01818" stroke-width="1.800" fill="none"/><path d="M0 8h8" stroke="#f08080" stroke-width=".8"/></svg>
<svg style="left:793.5px;top:411.5px;" width="14.5" height="11" viewBox="0 0 14.5 11"><path d="M0 5l1.500-.5 2 5.500 2-9.500h9" stroke="#2828a0" stroke-width="1.300" fill="none"/><path d="M9 3.500q-2-1-2 1.500v5.500M5.800 6h3" stroke="#108030" stroke-width="1.300" fill="none"/><path d="M12 3v5" stroke="#c02020" stroke-width="1.500"/><circle cx="12" cy="9.800" r=".9" fill="#c02020"/></svg>
<svg style="left:879px;top:412px;" width="14.5" height="9.5" viewBox="0 0 14.5 9.5"><path d="M1 0l2 7M2.500 6.500h7q3 0 3-2.500-2-.5-3 1h-5" stroke="#e8b010" stroke-width="1.500" fill="none"/><ellipse cx="9" cy="7.500" rx="3.500" ry="1.500" fill="none" stroke="#e8b010" stroke-width="1.200"/><path d="M13.500 7.500h1" stroke="#a07008" stroke-width="1.200"/></svg>
<svg style="left:434.5px;top:427px;" width="11" height="14" viewBox="0 0 11 14"><rect x=".5" y=".5" width="10" height="13" rx="1" fill="#787c80" stroke="#484c50" stroke-width=".8"/><rect x="2" y="2" width="7" height="3.500" fill="#50d850"/><circle cx="5.500" cy="9" r="2" fill="#803888"/><path d="M.5 12.500h10" stroke="#a8acb0" stroke-width="1"/></svg>
<svg style="left:523.5px;top:427.5px;" width="14" height="13.5" viewBox="0 0 14 13.5"><path d="M0 2.500h14M0 7h14M0 11h14" stroke="#c0c0c0" stroke-width=".8"/><path d="M5 2h9" stroke="#e06060" stroke-width="1" stroke-dasharray="1.500 1"/><path d="M0 12.500h2.500l1.500-12h3l1.500 12h5" stroke="#10e010" stroke-width="1.300" fill="none"/><path d="M2 13h4" stroke="#2020e0" stroke-width="1"/></svg>
<svg style="left:598px;top:428px;" width="15" height="8" viewBox="0 0 15 8"><path d="M0 7.500l4.500-7.500 4.500 7.500z" fill="#b8e0f0"/><path d="M1 7.800h8" stroke="#90a8b8" stroke-width="1"/><path d="M6 1.500h8.500l0 1-7 .5z" fill="#e82020"/><path d="M7 3h7.500v1.500l-5 .2z" fill="#f0a020"/><path d="M8.500 4.500h6v1.500l-4 .2z" fill="#30c030"/><path d="M10 6h4.500v1.800l-2.500-.3z" fill="#3050e0"/><rect x="0" y="0" width="2" height="2" fill="#fff"/></svg>
<svg style="left:658px;top:427.5px;" width="16" height="13" viewBox="0 0 16 13"><path d="M3 1.500l-1 1.500M13 1.500l1 1.500M3 11.500l-1-1.500M13 11.500l1-1.500" stroke="#202020" stroke-width="1.300"/><rect x="2.500" y="2" width="11" height="9" rx="2" fill="#404040"/><ellipse cx="8" cy="6.500" rx="7.500" ry="3.800" fill="#e83030" stroke="#303030" stroke-width=".8"/><path d="M4 4v5M6.500 3.500v6M9 3.500v6M11.500 4v5" stroke="#f8b0b0" stroke-width=".9"/></svg>
<svg style="left:747px;top:428px;" width="13" height="12.5" viewBox="0 0 13 12.5"><path d="M1 12.500v-3M3.500 12.500v-6M6 12.500v-12M8.500 12.500v-8M11 12.500v-5" stroke="#607888" stroke-width="1.500"/><path d="M1.800 12.500v-3M4.300 12.500v-6M6.800 12.500v-12M9.300 12.500v-8M11.800 12.500v-5" stroke="#202830" stroke-width=".6"/></svg>
<svg style="left:833.5px;top:427px;" width="14.5" height="14" viewBox="0 0 14.5 14"><rect x="4" y="1" width="10" height="12" rx="1" fill="#88b8f0" stroke="#5088d0" stroke-width=".8"/><rect x="5.500" y="2.500" width="7" height="2.500" fill="#d8e8fc"/><path d="M5.500 7h2M8.500 7h2M11.500 7h1.500M5.500 9h2M8.500 9h2M5.500 11h2M8.500 11h2" stroke="#e8f0fc" stroke-width="1.200"/><circle cx="12" cy="7.500" r=".9" fill="#f08020"/><path d="M4 3q-3.500-2-3 1.500t2.500 3-1.500 4 1 2" stroke="#2040c0" stroke-width="1.300" fill="none"/></svg>
<svg style="left:916px;top:427px;" width="10.5" height="13" viewBox="0 0 10.5 13"><path d="M1 1.500h8.500v9.500l-2 1.500h-6.500z" fill="#f4f4f8" stroke="#6878c0" stroke-width="1"/><path d="M2.500.5v2M4.500.5v2M6.500.5v2M8.500.5v2" stroke="#e0b040" stroke-width=".9"/><path d="M3 5h5M3 7h5M3 9h4" stroke="#8898b8" stroke-width=".9"/></svg>
<span class="t" style="left:431.2px;top:448.59px;font-size:11px;color:#1a1a1a;transform:scaleX(0.9061);transform-origin:0 0;">Результаты</span>
<div style="left:492px;top:445px;width:1px;height:19px;background:#aca899"></div>
<div style="left:493px;top:445px;width:1px;height:19px;background:#fff"></div>
<div style="left:497px;top:446px;width:58.5px;height:17.5px;background:#f0eee2;border:1.500px solid #716f64;border-right:1px solid #fff;border-bottom:1px solid #fff"></div>
<span class="t" style="left:504px;top:449.29px;font-size:11px;color:#1a1a1a;transform:scaleX(0.8806);transform-origin:0 0;">Настройки</span>
<div style="left:429px;top:469.5px;width:126px;height:1px;background:#aca899"></div>
<div style="left:429px;top:470.5px;width:126px;height:1px;background:#fff"></div>
<div style="left:429px;top:476px;width:119.5px;height:28px;border:1px solid #aca899;box-shadow:1px 1px 0 #fff, inset 1px 1px 0 #fff"></div>
<div style="left:434.5px;top:475px;width:32px;height:3px;background:#ece9d8"></div>
<span class="t" style="left:436.5px;top:471.49px;font-size:11px;color:#1a1a1a;transform:scaleX(0.8333);transform-origin:0 0;">Канал:</span>
<svg style="left:436.2px;top:485.5px;" width="12" height="12" viewBox="0 0 12 12"><circle cx="6" cy="6" r="4.800" fill="#fff" stroke="#8c8878" stroke-width="1"/><path d="M2 8.800a4.800 4.800 0 0 0 8.500-5" fill="none" stroke="#fff" stroke-width="1.200"/><path d="M9.800 3a4.800 4.800 0 0 0-7.800 5.600" fill="none" stroke="#70695c" stroke-width="1.100"/><circle cx="6" cy="6" r="2" fill="#000"/></svg>
<svg style="left:491.2px;top:485.5px;" width="12" height="12" viewBox="0 0 12 12"><circle cx="6" cy="6" r="4.800" fill="#fff" stroke="#8c8878" stroke-width="1"/><path d="M2 8.800a4.800 4.800 0 0 0 8.500-5" fill="none" stroke="#fff" stroke-width="1.200"/><path d="M9.800 3a4.800 4.800 0 0 0-7.800 5.600" fill="none" stroke="#70695c" stroke-width="1.100"/></svg>
<span class="t" style="left:452.5px;top:486.49px;font-size:11px;color:#1a1a1a;">1</span>
<span class="t" style="left:507.7px;top:486.49px;font-size:11px;color:#1a1a1a;">2</span>
<span class="t" style="left:430.6px;top:511.59px;font-size:11px;color:#1a1a1a;transform:scaleX(0.8529);transform-origin:0 0;">Отображать</span>
<div style="left:430px;top:523.0px;width:120px;height:18.5px;background:#fff;border:1px solid #c2beaa;box-shadow:inset 1px 1px 0 #b2ae9a, inset -1px -1px 0 #fff"></div>
<div style="left:534px;top:525.0px;width:14.5px;height:15.0px;background:#fff"></div>
<div style="left:534.2px;top:525.2px;width:13.8px;height:6.8px;background:#ece9d8;border-top:1px solid #fff;border-left:1px solid #fff;border-right:1.500px solid #807c70;border-bottom:1.500px solid #807c70"></div>
<svg style="left:539.8px;top:527.0px;" width="3.6" height="2.4" viewBox="0 0 3.6 2.4"><path d="M0 2.400h3.600l-1.800-2.400z" fill="#000"/></svg>
<div style="left:534.2px;top:533.0px;width:13.8px;height:6.8px;background:#ece9d8;border-top:1px solid #fff;border-left:1px solid #fff;border-right:1.500px solid #807c70;border-bottom:1.500px solid #807c70"></div>
<svg style="left:539.8px;top:535.0px;" width="3.6" height="2.4" viewBox="0 0 3.6 2.4"><path d="M0 0h3.600l-1.800 2.400z" fill="#000"/></svg>
<span class="t" style="left:432.5px;top:526.29px;font-size:11px;color:#1a1a1a;transform:scaleX(0.8163);transform-origin:0 0;">50</span>
<span class="t" style="left:430.6px;top:546.59px;font-size:11px;color:#1a1a1a;transform:scaleX(0.8694);transform-origin:0 0;">Мин. индекс</span>
<div style="left:430px;top:558.0px;width:120px;height:18.5px;background:#fff;border:1px solid #c2beaa;box-shadow:inset 1px 1px 0 #b2ae9a, inset -1px -1px 0 #fff"></div>
<div style="left:534px;top:560.0px;width:14.5px;height:15.0px;background:#fff"></div>
<div style="left:534.2px;top:560.2px;width:13.8px;height:6.8px;background:#ece9d8;border-top:1px solid #fff;border-left:1px solid #fff;border-right:1.500px solid #807c70;border-bottom:1.500px solid #807c70"></div>
<svg style="left:539.8px;top:562.0px;" width="3.6" height="2.4" viewBox="0 0 3.6 2.4"><path d="M0 2.400h3.600l-1.800-2.400z" fill="#000"/></svg>
<div style="left:534.2px;top:568.0px;width:13.8px;height:6.8px;background:#ece9d8;border-top:1px solid #fff;border-left:1px solid #fff;border-right:1.500px solid #807c70;border-bottom:1.500px solid #807c70"></div>
<svg style="left:539.8px;top:570.0px;" width="3.6" height="2.4" viewBox="0 0 3.6 2.4"><path d="M0 0h3.600l-1.800 2.400z" fill="#000"/></svg>
<span class="t" style="left:432.5px;top:561.29px;font-size:11px;color:#1a1a1a;">1</span>
<span class="t" style="left:430.6px;top:599.09px;font-size:11px;color:#1a1a1a;transform:scaleX(0.8825);transform-origin:0 0;">Макс. уровень (лог.)</span>
<div style="left:430px;top:610.5px;width:120px;height:18.5px;background:#fff;border:1px solid #c2beaa;box-shadow:inset 1px 1px 0 #b2ae9a, inset -1px -1px 0 #fff"></div>
<div style="left:534px;top:612.5px;width:14.5px;height:15px;background:#fff"></div>
<div style="left:534.2px;top:612.7px;width:13.8px;height:6.8px;background:#ece9d8;border-top:1px solid #fff;border-left:1px solid #fff;border-right:1.500px solid #807c70;border-bottom:1.500px solid #807c70"></div>
<svg style="left:539.8px;top:614.5px;" width="3.6" height="2.4" viewBox="0 0 3.6 2.4"><path d="M0 2.400h3.600l-1.800-2.400z" fill="#000"/></svg>
<div style="left:534.2px;top:620.5px;width:13.8px;height:6.8px;background:#ece9d8;border-top:1px solid #fff;border-left:1px solid #fff;border-right:1.500px solid #807c70;border-bottom:1.500px solid #807c70"></div>
<svg style="left:539.8px;top:622.5px;" width="3.6" height="2.4" viewBox="0 0 3.6 2.4"><path d="M0 0h3.600l-1.800 2.400z" fill="#000"/></svg>
<span class="t" style="left:432.5px;top:613.79px;font-size:11px;color:#1a1a1a;transform:scaleX(0.8365);transform-origin:0 0;">33,56 дБ</span>
<span class="t" style="left:430.6px;top:634.09px;font-size:11px;color:#1a1a1a;transform:scaleX(0.8715);transform-origin:0 0;">Мин. уровень (лог.)</span>
<div style="left:430px;top:645.5px;width:120px;height:18.5px;background:#fff;border:1px solid #c2beaa;box-shadow:inset 1px 1px 0 #b2ae9a, inset -1px -1px 0 #fff"></div>
<div style="left:534px;top:647.5px;width:14.5px;height:15px;background:#fff"></div>
<div style="left:534.2px;top:647.7px;width:13.8px;height:6.8px;background:#ece9d8;border-top:1px solid #fff;border-left:1px solid #fff;border-right:1.500px solid #807c70;border-bottom:1.500px solid #807c70"></div>
<svg style="left:539.8px;top:649.5px;" width="3.6" height="2.4" viewBox="0 0 3.6 2.4"><path d="M0 2.400h3.600l-1.800-2.400z" fill="#000"/></svg>
<div style="left:534.2px;top:655.5px;width:13.8px;height:6.8px;background:#ece9d8;border-top:1px solid #fff;border-left:1px solid #fff;border-right:1.500px solid #807c70;border-bottom:1.500px solid #807c70"></div>
<svg style="left:539.8px;top:657.5px;" width="3.6" height="2.4" viewBox="0 0 3.6 2.4"><path d="M0 0h3.600l-1.800 2.400z" fill="#000"/></svg>
<span class="t" style="left:432.5px;top:648.79px;font-size:11px;color:#1a1a1a;transform:scaleX(0.8331);transform-origin:0 0;">-24,019 дБ</span>
<span class="t" style="left:430.6px;top:669.09px;font-size:11px;color:#aca899;transform:scaleX(0.8595);transform-origin:0 0;">Макс. уровень (лин.)</span>
<div style="left:430px;top:680.5px;width:120px;height:18.5px;background:#fff;border:1px solid #c2beaa;box-shadow:inset 1px 1px 0 #b2ae9a, inset -1px -1px 0 #fff"></div>
<div style="left:534px;top:682.5px;width:14.5px;height:15px;background:#fff"></div>
<div style="left:534.2px;top:682.7px;width:13.8px;height:6.8px;background:#ece9d8;border-top:1px solid #fff;border-left:1px solid #fff;border-right:1.500px solid #807c70;border-bottom:1.500px solid #807c70"></div>
<svg style="left:539.8px;top:684.5px;" width="3.6" height="2.4" viewBox="0 0 3.6 2.4"><path d="M0 2.400h3.600l-1.800-2.400z" fill="#000"/></svg>
<div style="left:534.2px;top:690.5px;width:13.8px;height:6.8px;background:#ece9d8;border-top:1px solid #fff;border-left:1px solid #fff;border-right:1.500px solid #807c70;border-bottom:1.500px solid #807c70"></div>
<svg style="left:539.8px;top:692.5px;" width="3.6" height="2.4" viewBox="0 0 3.6 2.4"><path d="M0 0h3.600l-1.800 2.400z" fill="#000"/></svg>
<span class="t" style="left:432.5px;top:683.79px;font-size:11px;color:#aca899;transform:scaleX(0.84);transform-origin:0 0;">47,628 В</span>
<span class="t" style="left:430.6px;top:704.59px;font-size:11px;color:#aca899;transform:scaleX(0.848);transform-origin:0 0;">Мин. уровень (лин.)</span>
<div style="left:430px;top:716.0px;width:120px;height:18.5px;background:#fff;border:1px solid #c2beaa;box-shadow:inset 1px 1px 0 #b2ae9a, inset -1px -1px 0 #fff"></div>
<div style="left:534px;top:718.0px;width:14.5px;height:15.0px;background:#fff"></div>
<div style="left:534.2px;top:718.2px;width:13.8px;height:6.8px;background:#ece9d8;border-top:1px solid #fff;border-left:1px solid #fff;border-right:1.500px solid #807c70;border-bottom:1.500px solid #807c70"></div>
<svg style="left:539.8px;top:720.0px;" width="3.6" height="2.4" viewBox="0 0 3.6 2.4"><path d="M0 2.400h3.600l-1.800-2.400z" fill="#000"/></svg>
<div style="left:534.2px;top:726.0px;width:13.8px;height:6.8px;background:#ece9d8;border-top:1px solid #fff;border-left:1px solid #fff;border-right:1.500px solid #807c70;border-bottom:1.500px solid #807c70"></div>
<svg style="left:539.8px;top:728.0px;" width="3.6" height="2.4" viewBox="0 0 3.6 2.4"><path d="M0 0h3.600l-1.800 2.400z" fill="#000"/></svg>
<span class="t" style="left:432.5px;top:719.29px;font-size:11px;color:#aca899;transform:scaleX(0.8526);transform-origin:0 0;">66,177 мВ</span>
<div style="left:431px;top:580px;width:11px;height:11px;background:#fff;border:1.500px solid #8c8878;border-right:1px solid #fff;border-bottom:1px solid #fff"></div>
<svg style="left:432.5px;top:582px;" width="8" height="7.5" viewBox="0 0 8 7.5"><path d="M.8 3l2.200 2.500 4-5" stroke="#000" stroke-width="1.700" fill="none"/></svg>
<span class="t" style="left:447px;top:579.99px;font-size:11px;color:#1a1a1a;transform:scaleX(0.8709);transform-origin:0 0;">Автовыбор</span>
<div style="left:431px;top:738px;width:11px;height:11px;background:#fff;border:1.500px solid #8c8878;border-right:1px solid #fff;border-bottom:1px solid #fff"></div>
<svg style="left:432.5px;top:740px;" width="8" height="7.5" viewBox="0 0 8 7.5"><path d="M.8 3l2.200 2.500 4-5" stroke="#000" stroke-width="1.700" fill="none"/></svg>
<span class="t" style="left:447px;top:737.99px;font-size:11px;color:#1a1a1a;transform:scaleX(0.8709);transform-origin:0 0;">Автовыбор</span>
<span class="t" style="left:431px;top:756.29px;font-size:11px;color:#1a1a1a;transform:scaleX(0.8559);transform-origin:0 0;">Окно:</span>
<div style="left:429.5px;top:771px;width:121.5px;height:18px;background:#fff;border:1px solid #c2beaa;box-shadow:inset 1px 1px 0 #b2ae9a, inset -1px -1px 0 #fff"></div>
<div style="left:432px;top:773.5px;width:102px;height:13.5px;background:#316ac5;border:1px dotted #c8a040"></div>
<span class="t" style="left:433.5px;top:775.09px;font-size:11px;color:#fff;transform:scaleX(0.8881);transform-origin:0 0;">Конический косинус</span>
<div style="left:535.5px;top:773px;width:15px;height:14.5px;background:#ece9d8;border:1px solid #fff;border-right:1.500px solid #716f64;border-bottom:1.500px solid #716f64"></div>
<svg style="left:540px;top:778.5px;" width="6" height="3.5" viewBox="0 0 6 3.5"><path d="M0 0h6l-3 3.500z" fill="#000"/></svg>
<div style="left:423px;top:799px;width:553px;height:1px;background:#b8b4a4"></div>
<div style="left:573px;top:447.5px;width:399px;height:1px;background:#aca899"></div>
<div style="left:573px;top:447.5px;width:1px;height:27px;background:#aca899"></div>
<div style="left:573px;top:474.5px;width:399px;height:1px;background:#fff"></div>
<div style="left:971.5px;top:448px;width:1px;height:27px;background:#fff"></div>
<div style="left:574px;top:448.5px;width:397px;height:1px;background:#fff"></div>
<div style="left:574px;top:448.5px;width:1px;height:25px;background:#fff"></div>
<div style="left:574px;top:473.5px;width:397px;height:1px;background:#c8c4b4"></div>
<div style="left:576.5px;top:450.5px;width:21.5px;height:21px;background:#f3f1e8;border:1px solid #d8d4c4;border-right-color:#fff;border-bottom-color:#fff"></div>
<div style="left:605px;top:450.5px;width:21.5px;height:21px;background:#f3f1e8;border:1px solid #d8d4c4;border-right-color:#fff;border-bottom-color:#fff"></div>
<div style="left:627.5px;top:450.5px;width:21.0px;height:21px;background:#f3f1e8;border:1px solid #d8d4c4;border-right-color:#fff;border-bottom-color:#fff"></div>
<div style="left:601px;top:452px;width:1px;height:18px;background:#c5c2b2"></div>
<div style="left:602px;top:452px;width:1px;height:18px;background:#fff"></div>
<div style="left:717.5px;top:452px;width:1px;height:18px;background:#c5c2b2"></div>
<div style="left:718.5px;top:452px;width:1px;height:18px;background:#fff"></div>
<svg style="left:582px;top:456px;" width="12" height="13" viewBox="0 0 12 13"><rect x=".7" y=".7" width="10.600" height="11.600" fill="#686018" stroke="#e8e000" stroke-width="1.400"/><path d="M3 3v8M5 5v6M7 2.500v8.500M9 4v7" stroke="#f8f060" stroke-width="1.100"/><path d="M1.500 7h9" stroke="#e8e000" stroke-width=".8"/></svg>
<svg style="left:610px;top:455px;" width="14" height="14" viewBox="0 0 14 14"><path d="M.5 12.500l7-11.500M.5 13h13" stroke="#101010" stroke-width="1.400" fill="none"/><path d="M3.500 9.500h9" stroke="#101010" stroke-width="1"/><ellipse cx="9.500" cy="5" rx="2.200" ry="3" fill="none" stroke="#101010" stroke-width="1" transform="rotate(25 9.500 5)"/><path d="M11 1.500l-3 7" stroke="#101010" stroke-width=".9"/></svg>
<svg style="left:631px;top:456px;" width="15" height="13" viewBox="0 0 15 13"><path d="M1.500 0v7M3 1v6M.5 7.500h3l1.500-3v4l1.500-2v3l1.500-1.500v2.500l1.500-1v2l1.500-.5" stroke="#101010" stroke-width="1.200" fill="none"/><path d="M9 9l5 3.500" stroke="#101010" stroke-width=".9" stroke-dasharray="1.500 1"/></svg>
<svg style="left:653px;top:454px;" width="14" height="14" viewBox="0 0 14 14"><path d="M3.500 0v13M0 2.500h6" stroke="#d8dce8" stroke-width="1.100"/><path d="M7 6v-2.500a2.800 2.800 0 0 1 5.600 0" fill="none" stroke="#e0a020" stroke-width="1.500"/><rect x="4.500" y="6" width="9" height="7.500" rx="1.200" fill="#f0c040" stroke="#c08810" stroke-width=".8"/><rect x="7.500" y="8" width="3" height="3.500" fill="#f8e8a0"/></svg>
<span class="t" style="left:675px;top:458.26px;font-size:9.5px;color:#000;font-weight:bold;transform:scaleX(0.7631);transform-origin:0 0;font-style:italic">Abs</span>
<svg style="left:696px;top:455px;" width="15" height="13" viewBox="0 0 15 13"><rect x=".7" y=".7" width="13.600" height="11.600" rx="1" fill="#fff" stroke="#1060d0" stroke-width="1.400"/><rect x="1" y="1" width="13" height="2.500" fill="#2878e0"/><path d="M2.500 6h10M2.500 8.500h10M2.500 10.500h10" stroke="#88b0e8" stroke-width="1"/><path d="M4.500 4.500h2M8.500 4.500h2" stroke="#5890e0" stroke-width=".8"/></svg>
<svg style="left:725.5px;top:455px;" width="14.5" height="12" viewBox="0 0 14.5 12"><rect x=".5" y="1.500" width="13.500" height="9.500" rx="1.500" fill="#a8acb4" stroke="#80848c" stroke-width=".8"/><rect x="2" y=".3" width="4" height="2" fill="#9094a0"/><path d="M.8 2l5 1.500v7" stroke="#d4d8e0" stroke-width="1" fill="none"/><circle cx="9" cy="6" r="3" fill="#5078a8" stroke="#c8ccd4" stroke-width=".8"/><circle cx="9" cy="6" r="1.300" fill="#203858"/></svg>
<div style="left:573px;top:480px;width:399px;height:1px;background:#aca899"></div>
<div style="left:573px;top:480px;width:1px;height:238px;background:#aca899"></div>
<div style="left:574px;top:481px;width:397.5px;height:236px;background:#e8ffff"></div>
<div style="left:971.5px;top:480px;width:1px;height:238px;background:#fff"></div>
<div style="left:574px;top:715.5px;width:397.5px;height:1.1px;background:#5252ff"></div>
<div style="left:574px;top:717px;width:397.5px;height:7.5px;background:#e8ffff"></div>
<div style="left:573px;top:724.5px;width:399.5px;height:2.5px;background:#dcd8c8"></div>
<div style="left:573px;top:724.5px;width:399.5px;height:1px;background:#f4f2ea"></div>
<div style="left:573px;top:727px;width:1px;height:62px;background:#aca899"></div>
<div style="left:574px;top:727px;width:397.5px;height:31px;background:#e8ffff"></div>
<div style="left:575.5px;top:758px;width:395.5px;height:30.5px;background:#140000"></div>
<div style="left:574px;top:788.5px;width:398px;height:1px;background:#fff"></div>
<svg style="left:0px;top:0px;" width="1000" height="800" viewBox="0 0 1000 800"><path d="M575.2 756V758M583.1 756V758M591.1 756V758M599.0 756V758M606.9 756V758M614.9 756V758M622.8 756V758M630.7 756V758M638.6 756V758M646.6 756V758M654.5 756V758M662.4 756V758M670.4 756V758M678.3 756V758M686.2 756V758M694.2 756V758M702.1 756V758M710.0 756V758M717.9 756V758M725.9 756V758M733.8 756V758M741.7 756V758M749.7 756V758M757.6 756V758M765.5 756V758M773.5 756V758M781.4 756V758M789.3 756V758M797.2 756V758M805.2 756V758M813.1 756V758M821.0 756V758M829.0 756V758M836.9 756V758M844.8 756V758M852.8 756V758M860.7 756V758M868.6 756V758M876.5 756V758M884.5 756V758M892.4 756V758M900.3 756V758M908.3 756V758M916.2 756V758M924.1 756V758M932.0 756V758M940.0 756V758M947.9 756V758M955.8 756V758M963.8 756V758" stroke="#b8c0c0" stroke-width="1"/><path d="M575.2 758V760.500M583.1 758V760.500M591.1 758V760.500M599.0 758V760.500M606.9 758V760.500M614.9 758V760.500M622.8 758V760.500M630.7 758V760.500M638.6 758V760.500M646.6 758V760.500M654.5 758V760.500M662.4 758V760.500M670.4 758V760.500M678.3 758V760.500M686.2 758V760.500M694.2 758V760.500M702.1 758V760.500M710.0 758V760.500M717.9 758V760.500M725.9 758V760.500M733.8 758V760.500M741.7 758V760.500M749.7 758V760.500M757.6 758V760.500M765.5 758V760.500M773.5 758V760.500M781.4 758V760.500M789.3 758V760.500M797.2 758V760.500M805.2 758V760.500M813.1 758V760.500M821.0 758V760.500M829.0 758V760.500M836.9 758V760.500M844.8 758V760.500M852.8 758V760.500M860.7 758V760.500M868.6 758V760.500M876.5 758V760.500M884.5 758V760.500M892.4 758V760.500M900.3 758V760.500M908.3 758V760.500M916.2 758V760.500M924.1 758V760.500M932.0 758V760.500M940.0 758V760.500M947.9 758V760.500M955.8 758V760.500M963.8 758V760.500" stroke="#786464" stroke-width="1"/></svg>
<div style="left:963px;top:727px;width:1px;height:31px;background:#3838ff"></div>
<div style="left:963px;top:758px;width:1px;height:30.5px;background:#c8a800"></div>
<svg style="left:0px;top:0px;" width="1000" height="800" viewBox="0 0 1000 800"><path d="M574.5,483 L574.5,508 L583,668 L590.8,508L590.8,508 C592.0,509.8 595.3,513.8 598,519 C600.7,524.2 604.2,530.5 607,539 C609.8,547.5 612.0,560.2 615,570 C618.0,579.8 621.3,588.0 625,598 C628.7,608.0 633.0,617.7 637,630 C641.0,642.3 644.9,658.3 649,672 C653.1,685.7 659.5,705.3 661.6,712 L670,496L670,496 C671.5,498.3 675.8,501.0 679,510 C682.2,519.0 685.0,536.7 689,550 C693.0,563.3 698.3,577.0 703,590 C707.7,603.0 712.3,614.0 717,628 C721.7,642.0 727.0,660.4 731,674 C735.0,687.6 739.3,703.6 741,709.5 L750,496L750,496 C751.2,498.3 754.5,503.8 757,510 C759.5,516.2 762.6,525.1 765,533.4 C767.4,541.7 769.0,551.2 771.5,560 C774.0,568.8 776.8,577.3 780,586 C783.2,594.7 788.2,605.0 791,612 C793.8,619.0 793.7,616.0 797,628 C800.3,640.0 807.1,670.8 811,684 C814.9,697.2 818.8,703.6 820.3,707.5 L829.5,495.8L829.5,495.8 C830.9,498.3 834.4,499.9 838,511 C841.6,522.1 846.3,547.2 851,562.5 C855.7,577.8 861.7,592.1 866,603 C870.3,613.9 872.9,615.2 877,628 C881.1,640.8 887.0,666.5 890.8,679.6 C894.6,692.7 898.5,702.0 900,706.5 L908.6,483.3L908.6,483.3 C910.1,487.2 914.0,494.4 917.6,506.5 C921.2,518.6 926.2,541.7 930.5,556 C934.8,570.3 939.2,581.0 943.5,592.5 C947.8,604.0 953.1,615.8 956.4,625 C959.7,634.2 962.2,644.2 963.4,648" fill="none" stroke="#8e8888" stroke-width="1" stroke-linejoin="round"/><path d="M574.500 483V508" stroke="#9c9898" stroke-width="2"/><path d="M583 640V668" stroke="#a09c9c" stroke-width="1.600"/><path d="M575,503 L582.6,481 L590.6,520 L590.6,520 C592.2,523.5 597.1,534.7 600,541 C602.9,547.3 605.8,554.2 608,558 C610.2,561.8 610.7,562.4 613,563.6 C615.3,564.8 619.3,564.4 622,565 C624.7,565.6 626.5,565.2 629,567 C631.5,568.8 634.2,572.8 637,576 C639.8,579.2 643.3,584.4 646,586.4 C648.7,588.4 649.8,588.2 653,588 C656.2,587.8 662.0,585.3 665,585 C668.0,584.7 668.7,584.9 671,586.4 C673.3,587.9 676.3,591.3 679,594 C681.7,596.7 684.3,601.1 687,602.4 C689.7,603.7 692.0,602.3 695,601.6 C698.0,600.9 702.5,598.5 705,598 C707.5,597.5 707.8,597.1 710,598.4 C712.2,599.7 715.2,603.4 718,606 C720.8,608.6 724.2,613.1 727,614 C729.8,614.9 732.5,612.8 735,611.6 C737.5,610.4 739.5,607.6 742,607 C744.5,606.4 747.3,606.7 750,608 C752.7,609.3 755.5,612.5 758,615 C760.5,617.5 762.2,622.1 765,622.7 C767.8,623.3 771.8,619.8 775,618.5 C778.2,617.2 781.2,615.1 784,614.7 C786.8,614.3 789.5,614.6 792,616 C794.5,617.4 796.7,620.8 799,623 C801.3,625.2 803.5,628.7 806,629 C808.5,629.3 811.3,626.3 814,625 C816.7,623.7 819.6,621.6 822,621 C824.4,620.4 825.9,620.2 828.4,621.5 C830.9,622.8 834.3,626.8 837,629 C839.7,631.2 842.2,633.7 844.5,634.5 C846.8,635.3 848.3,635.1 851,633.8 C853.7,632.5 857.9,627.6 860.7,626.5 C863.5,625.4 865.3,625.8 868,627 C870.7,628.2 874.1,631.5 877,633.5 C879.9,635.5 882.9,638.3 885.4,638.8 C887.9,639.3 889.1,637.9 892,636.6 C894.9,635.3 899.9,631.7 902.6,630.8 C905.3,629.9 905.8,630.0 908,631 C910.2,632.0 913.3,635.2 916,637 C918.7,638.8 921.2,641.3 924,642 C926.8,642.7 929.1,642.2 932.7,641 C936.3,639.8 942.4,635.8 945.6,635 C948.8,634.2 949.9,634.8 952,636 C954.1,637.2 956.1,640.0 958,642 C959.9,644.0 962.5,647.0 963.4,648" fill="none" stroke="#4a4040" stroke-width=".95" stroke-linejoin="round"/></svg>
<div style="left:582.5px;top:677.5px;width:1.5px;height:1px;background:#787070"></div>
<div style="left:637px;top:480px;width:242.5px;height:16px;background:#ffffe1;border-right:1px solid #8c8c80;border-bottom:1px solid #8c8c80"></div>
<span class="t" style="left:639px;top:482.89px;font-size:11px;color:#1a1a1a;transform:scaleX(0.8804);transform-origin:0 0;">Переключатель вида спектрограммы столбцы/линии</span>
</div></body></html>
